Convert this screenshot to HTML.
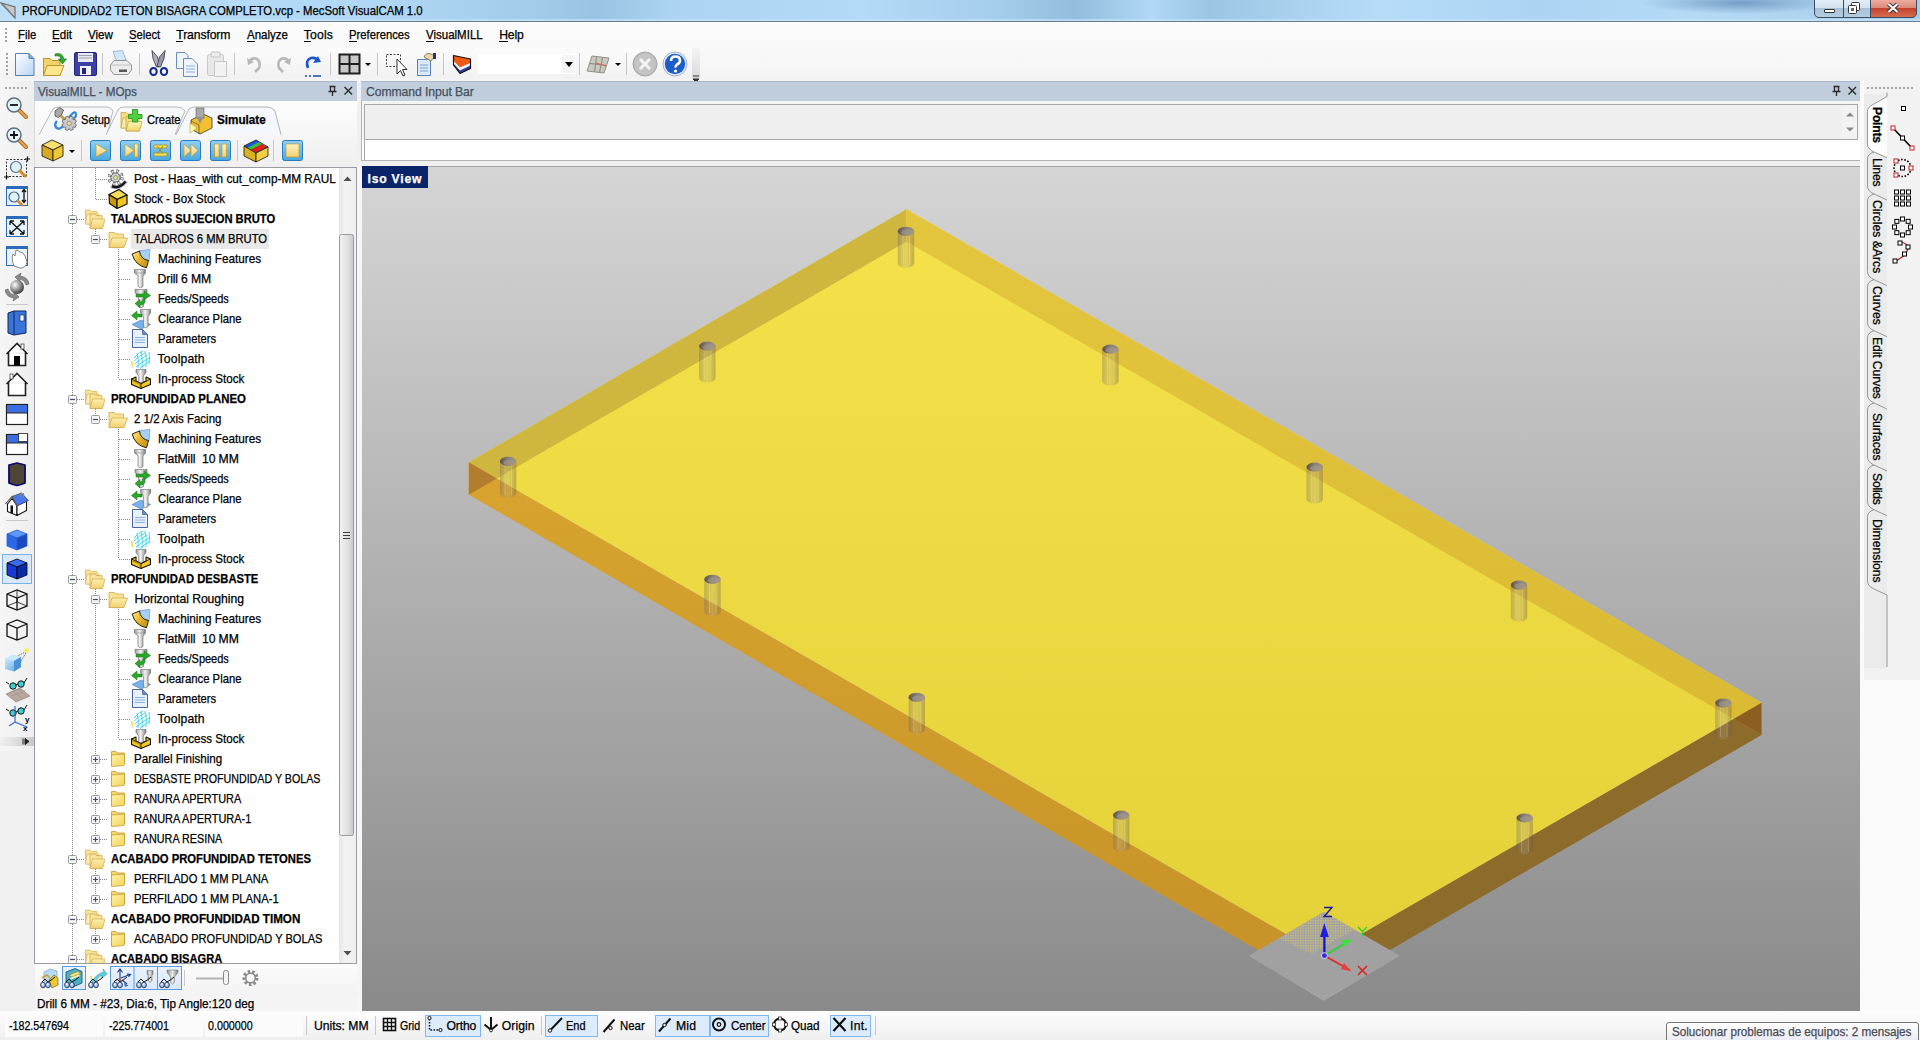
<!DOCTYPE html>
<html><head><meta charset="utf-8"><style>
*{margin:0;padding:0;box-sizing:border-box}
html,body{width:1920px;height:1040px;overflow:hidden;background:#f0f0f0;font-family:"Liberation Sans",sans-serif;font-size:11.5px;color:#000}
.a{position:absolute}
.t{position:absolute;white-space:pre;line-height:14px;-webkit-text-stroke:0.25px currentColor}
svg{position:absolute;overflow:visible}
</style></head><body>

<div class="a" style="left:0;top:0;width:1920px;height:22px;background:linear-gradient(90deg,#bcdef7 0%,#b6dbf6 10%,#afd7f4 20%,#a2cbe9 28%,#98c3e2 31%,#acd4f2 35%,#b3daf6 45%,#a5cdec 52%,#92bddc 56%,#b1d8f6 60%,#9ac5e3 63%,#a9d1ee 67%,#b6dcf8 72%,#acd4f2 80%,#b4daf6 88%,#a8cdea 100%)"></div>
<div class="a" style="left:1640px;top:-8px;width:200px;height:22px;background:radial-gradient(ellipse at center,rgba(70,110,160,0.55) 0%,rgba(70,110,160,0) 70%)"></div>
<div class="a" style="left:0;top:19px;width:1920px;height:2px;background:#c4e4f8;opacity:0.7"></div>
<div class="a" style="left:0;top:21px;width:1920px;height:1px;background:#6b7d8f"></div>

<svg style="left:0;top:1px" width="18" height="20"><path d="M1 2 L15 17 L15 6 Z" fill="#c8c8c8" stroke="#707070" stroke-width="1.2"/><path d="M4 4 L13 14" stroke="#909090" stroke-width="1"/></svg>
<div class="t" style="left:21.50px;top:3.94px;font-size:12.2px;transform:scaleX(0.9305);transform-origin:0 0;">PROFUNDIDAD2 TETON BISAGRA COMPLETO.vcp - MecSoft VisualCAM 1.0</div>
<div class="a" style="left:1814px;top:-2px;width:103px;height:20px;border:1px solid #3c4c5c;border-radius:0 0 5px 5px;overflow:hidden;background:#000">
<div class="a" style="left:0;top:0;width:28px;height:18px;background:linear-gradient(180deg,#e4eef7 0%,#d3e2ef 48%,#a9c1d8 52%,#b5cde2 100%)"></div>
<div class="a" style="left:28px;top:0;width:1px;height:18px;background:#3c4c5c"></div>
<div class="a" style="left:29px;top:0;width:26px;height:18px;background:linear-gradient(180deg,#e4eef7 0%,#d3e2ef 48%,#a9c1d8 52%,#b5cde2 100%)"></div>
<div class="a" style="left:55px;top:0;width:1px;height:18px;background:#3c4c5c"></div>
<div class="a" style="left:56px;top:0;width:47px;height:18px;background:linear-gradient(180deg,#eeb1a4 0%,#dc8b7a 48%,#c5432c 52%,#d26c4f 100%)"></div>
</div>
<div class="a" style="left:1824px;top:9px;width:11px;height:4px;background:#fff;border:1px solid #333;border-radius:1px"></div>
<svg style="left:1848px;top:2px" width="14" height="13"><rect x="3.5" y="0.5" width="8" height="8" rx="1" fill="#fff" stroke="#333"/><rect x="0.5" y="3.5" width="8" height="8" rx="1" fill="#fff" stroke="#333"/><rect x="3" y="6" width="3" height="3" fill="#666"/></svg>
<svg style="left:1887px;top:3px" width="12" height="10"><path d="M1.5 1 L10.5 9 M10.5 1 L1.5 9" stroke="#333" stroke-width="4"/><path d="M1.5 1 L10.5 9 M10.5 1 L1.5 9" stroke="#fff" stroke-width="2.2"/></svg>

<div class="a" style="left:0;top:22px;width:1920px;height:59px;background:linear-gradient(180deg,#fbfbfb 0%,#f8f8f8 50%,#f4f4f4 100%)"></div>
<div class="a" style="left:5px;top:28px;width:2px;height:14px;background:repeating-linear-gradient(180deg,#a0a0a0 0 2px,transparent 2px 4px)"></div>
<div class="t" style="left:18.00px;top:28.14px;font-size:12.2px;transform:scaleX(0.9283);transform-origin:0 0;">File</div>
<div class="a" style="left:18.0px;top:41px;width:7.1px;height:1px;background:#000"></div>
<div class="t" style="left:51.75px;top:28.14px;font-size:12.2px;transform:scaleX(0.9513);transform-origin:0 0;">Edit</div>
<div class="a" style="left:51.8px;top:41px;width:7.8px;height:1px;background:#000"></div>
<div class="t" style="left:88.00px;top:28.14px;font-size:12.2px;transform:scaleX(0.9533);transform-origin:0 0;">View</div>
<div class="a" style="left:88.0px;top:41px;width:7.8px;height:1px;background:#000"></div>
<div class="t" style="left:128.75px;top:28.14px;font-size:12.2px;transform:scaleX(0.9216);transform-origin:0 0;">Select</div>
<div class="a" style="left:128.8px;top:41px;width:7.8px;height:1px;background:#000"></div>
<div class="t" style="left:176.25px;top:28.14px;font-size:12.2px;letter-spacing:-0.111px;">Transform</div>
<div class="a" style="left:176.2px;top:41px;width:7.1px;height:1px;background:#000"></div>
<div class="t" style="left:247.00px;top:28.14px;font-size:12.2px;transform:scaleX(0.9446);transform-origin:0 0;">Analyze</div>
<div class="a" style="left:247.0px;top:41px;width:7.8px;height:1px;background:#000"></div>
<div class="t" style="left:303.75px;top:28.14px;font-size:12.2px;letter-spacing:0.192px;">Tools</div>
<div class="a" style="left:303.8px;top:41px;width:7.1px;height:1px;background:#000"></div>
<div class="t" style="left:349.25px;top:28.14px;font-size:12.2px;transform:scaleX(0.9235);transform-origin:0 0;">Preferences</div>
<div class="a" style="left:349.2px;top:41px;width:7.8px;height:1px;background:#000"></div>
<div class="t" style="left:425.75px;top:28.14px;font-size:12.2px;transform:scaleX(0.9437);transform-origin:0 0;">VisualMILL</div>
<div class="a" style="left:425.8px;top:41px;width:7.8px;height:1px;background:#000"></div>
<div class="t" style="left:499.25px;top:28.14px;font-size:12.2px;letter-spacing:-0.197px;">Help</div>
<div class="a" style="left:499.2px;top:41px;width:8.4px;height:1px;background:#000"></div>
<div class="a" style="left:3px;top:48px;width:697px;height:31px;background:linear-gradient(180deg,#fbfbfb,#f1f1f1);border-radius:3px"></div>
<div class="a" style="left:6px;top:53px;width:2px;height:22px;background:repeating-linear-gradient(180deg,#a0a0a0 0 2px,transparent 2px 4px)"></div>
<div class="a" style="left:102px;top:53px;width:1px;height:22px;background:#c5c5c5"></div>
<div class="a" style="left:139px;top:53px;width:1px;height:22px;background:#c5c5c5"></div>
<div class="a" style="left:234px;top:53px;width:1px;height:22px;background:#c5c5c5"></div>
<div class="a" style="left:330px;top:53px;width:1px;height:22px;background:#c5c5c5"></div>
<div class="a" style="left:377px;top:53px;width:1px;height:22px;background:#c5c5c5"></div>
<div class="a" style="left:443px;top:53px;width:1px;height:22px;background:#c5c5c5"></div>
<div class="a" style="left:579px;top:53px;width:1px;height:22px;background:#c5c5c5"></div>
<div class="a" style="left:626px;top:53px;width:1px;height:22px;background:#c5c5c5"></div>
<div class="a" style="left:692px;top:48px;width:8px;height:31px;background:linear-gradient(180deg,#f4f4f4,#d8d8d8)"></div>
<svg style="left:0;top:44px" width="700" height="36">
<!-- new doc -->
<path d="M15.5 9.5 H29 L34 14.5 V31.5 H15.5 Z" fill="url(#gdoc)" stroke="#5a7fae"/>
<path d="M29 9.5 V14.5 H34" fill="#7aa6d6" stroke="#5a7fae"/>
<!-- open folder -->
<path d="M43.5 14.5 H50 L52 16.5 H60 V31.5 H43.5 Z" fill="#f2d36a" stroke="#b8962a"/>
<path d="M43.5 31.5 L47 21.5 H64 L60 31.5 Z" fill="#fbe78e" stroke="#b8962a"/>
<path d="M55 10 Q62 8 64 15 L66.5 15 L62.5 20 L58.5 15 L61 15 Q60 11 55 12 Z" fill="#2ea82e" stroke="#1a701a" stroke-width="0.6"/>
<!-- save -->
<rect x="74.5" y="8.5" width="22" height="23" rx="1.5" fill="#3b3fa6" stroke="#23257a"/>
<rect x="78" y="9" width="15" height="9" fill="#e8e8f0"/>
<path d="M79 11.5 H92 M79 14 H92" stroke="#a0a0b8"/>
<rect x="80" y="22" width="11" height="9" fill="#f0f0f8"/>
<rect x="82" y="24" width="4" height="6" fill="#23257a"/>
<!-- print -->
<path d="M113 7.5 L122.5 6.5 L126 16 L116.5 17 Z" fill="#d2e8fa" stroke="#8aa8c8" stroke-width="0.8"/>
<path d="M110.5 21 L114 16.5 H127 L131.5 21 V26 L128 30.5 H114 L110.5 26 Z" fill="#ececec" stroke="#8a8a8a" stroke-width="0.9"/>
<path d="M110.5 21 L131.5 21" stroke="#b8b8b8" stroke-width="0.8"/>
<rect x="119" y="25.5" width="8" height="2.5" fill="#555"/>
<!-- cut -->
<path d="M152 6.5 L157.5 13 L160 22.5 L156.5 23 L153 14.5 Z" fill="#b0b0c0" stroke="#303040" stroke-width="0.8" stroke-linejoin="round"/>
<path d="M165 6.5 L164 14.5 L160.5 23 L157 22.5 L159.5 13 Z" fill="#9898a8" stroke="#303040" stroke-width="0.8" stroke-linejoin="round"/>
<ellipse cx="153.5" cy="27.5" rx="3.2" ry="3.6" fill="none" stroke="#102a90" stroke-width="2"/>
<ellipse cx="164" cy="27.5" rx="3.2" ry="3.6" fill="none" stroke="#102a90" stroke-width="2"/>
<!-- copy -->
<path d="M176.5 8.5 H185 L188 11.5 V24.5 H176.5 Z" fill="#eef4fc" stroke="#6a8cc0"/>
<path d="M183.5 14.5 H192 L197.5 20 V32.5 H183.5 Z" fill="#eef4fc" stroke="#6a8cc0"/>
<path d="M186 22 H195 M186 25 H195 M186 28 H195" stroke="#8ab0e0"/>
<!-- paste (disabled) -->
<rect x="207.5" y="10.5" width="16" height="21" rx="2" fill="#e8e8e8" stroke="#c8c8c8"/>
<rect x="211" y="8" width="9" height="5" rx="1" fill="#ececec" stroke="#c4c4c4"/>
<path d="M214.5 17.5 H226.5 V32.5 H214.5 Z" fill="#f2f2f2" stroke="#c8c8c8"/>
<!-- undo / redo gray -->
<path d="M249 18 Q252 13 257 15 Q261 18 259 24 L255 28" fill="none" stroke="#b8b8b8" stroke-width="2.6"/>
<path d="M247 14 L248 21 L254 18 Z" fill="#b8b8b8"/>
<path d="M289 18 Q286 13 281 15 Q277 18 279 24 L283 28" fill="none" stroke="#b8b8b8" stroke-width="2.6"/>
<path d="M291 14 L290 21 L284 18 Z" fill="#b8b8b8"/>
<!-- refresh blue -->
<path d="M308 24 Q305 16 311 14 Q317 13 318 18" fill="none" stroke="#1a56c8" stroke-width="2.6"/>
<path d="M313 19 L321 18 L318 12 Z" fill="#1a56c8"/>
<path d="M305 32 H307 M309 32 H311 M313 32 H321" stroke="#1a4ab0" stroke-width="1.6"/>
<!-- grid view -->
<rect x="339.5" y="10.5" width="20" height="19" fill="#c8c8c8" stroke="#202020" stroke-width="2"/>
<path d="M349.5 10.5 V29.5 M339.5 20 H359.5" stroke="#202020" stroke-width="2"/>
<path d="M365 19 H371 L368 22 Z" fill="#000"/>
<!-- select window -->
<rect x="386.5" y="10.5" width="14" height="12" fill="none" stroke="#404040" stroke-dasharray="2 1.5"/>
<path d="M397 15 L397 30 L400.5 26.5 L403 32 L405 31 L402.5 25.5 L407 25.5 Z" fill="#fff" stroke="#303030"/>
<!-- props -->
<path d="M417.5 15.5 H430.5 V31.5 H417.5 Z" fill="#dbe9f8" stroke="#5a80b8"/>
<path d="M420 21 H428 M420 24 H428 M420 27 H428" stroke="#7aa0d8"/>
<path d="M424 13 Q426 8 431 10 L435 12 L431 17 Z" fill="#e8d8a8" stroke="#806040" stroke-width="0.8"/>
<rect x="433" y="9" width="3" height="6" fill="#2030a0"/>
<!-- stock shape -->
<path d="M453.5 11.5 L470.5 15 V19 L460 23.5 L453.5 17 Z" fill="#f05a14"/>
<path d="M453.5 17 L460 23.5 L470.5 19 V21.5 L460 26.5 L453.5 19.5 Z" fill="#f4f0ff"/>
<path d="M453.5 19.5 L460 26.5 L470.5 21.5 V24.5 L460 29.5 L453.5 21 Z" fill="#2a3a98"/>
<path d="M453.5 11.5 L470.5 15 V24.5 L460 29.5 L453.5 21 Z" fill="none" stroke="#111" stroke-width="1.2" stroke-linejoin="round"/>
<!-- combo -->
<rect x="478" y="10" width="98" height="20" fill="#fff"/>
<rect x="562" y="11" width="13" height="18" fill="#f4f4f4"/>
<path d="M565 18 H573 L569 23 Z" fill="#000"/>
<!-- grid2 -->
<path d="M592 12 L609 14 L604 29 L587 27 Z" fill="#c8c8c0" stroke="#909088"/>
<path d="M590 19.5 L607 21.5 M596.5 13 L594.5 28 M602.5 13.5 L599.5 28.5" stroke="#888880"/>
<path d="M596 19 L606 22" stroke="#e06040" stroke-width="1"/>
<path d="M615 19 H621 L618 22 Z" fill="#000"/>
<!-- X circle gray -->
<circle cx="645" cy="20" r="12" fill="#bdbdbd" stroke="#a8a8a8"/>
<circle cx="645" cy="20" r="10.5" fill="#c4c4c4"/>
<path d="M640 15 L650 25 M650 15 L640 25" stroke="#f4f4f4" stroke-width="3"/>
<!-- help -->
<circle cx="675" cy="20" r="12" fill="#e4ecf8" stroke="#a0b4d0"/>
<circle cx="675" cy="20" r="10.2" fill="#1e5cc8"/>
<path d="M671 17 Q671 12.5 675.5 12.5 Q680 12.5 680 16.5 Q680 19 677 20.5 Q675.5 21.5 675.5 23.5" fill="none" stroke="#fff" stroke-width="2.6"/>
<circle cx="675.5" cy="27" r="1.6" fill="#fff"/>
<path d="M693 32 H699 M693 35 H699 L696 38 Z" stroke="#333" fill="#333"/>
<defs><linearGradient id="gdoc" x1="0" y1="0" x2="1" y2="1"><stop offset="0" stop-color="#ffffff"/><stop offset="1" stop-color="#b8d4f4"/></linearGradient></defs>
</svg>
<div class="a" style="left:0;top:81px;width:35px;height:670px;background:linear-gradient(90deg,#f6f6f6,#eeeeee);border-right:1px solid #d8d8d8"></div>
<div class="a" style="left:5px;top:87px;width:24px;height:2px;background:repeating-linear-gradient(90deg,#a8a8a8 0 2px,transparent 2px 4px)"></div>
<div class="a" style="left:0;top:737px;width:34px;height:9px;background:linear-gradient(90deg,#f0f0f0,#c8c8c8)"></div>
<svg style="left:22px;top:737px" width="10" height="9"><path d="M1 1.5 V7.5 M3 1.5 L7 4.5 L3 7.5 Z" stroke="#222" fill="#222"/></svg>
<div class="a" style="left:6px;top:304px;width:22px;height:1px;background:#c8c8c8"></div>
<div class="a" style="left:6px;top:520px;width:22px;height:1px;background:#c8c8c8"></div>
<svg style="left:0;top:0" width="35" height="760"><path d="M19.5 110.5 L26 117" stroke="#a86a20" stroke-width="4" stroke-linecap="round"/><path d="M19.5 110.5 L26 117" stroke="#e8a050" stroke-width="2.4" stroke-linecap="round"/><circle cx="14" cy="105" r="7" fill="#e4f6fc" stroke="#5a7080" stroke-width="1.5"/><path d="M10 105 H18" stroke="#111" stroke-width="1.8"/><path d="M19.5 140.5 L26 147" stroke="#a86a20" stroke-width="4" stroke-linecap="round"/><path d="M19.5 140.5 L26 147" stroke="#e8a050" stroke-width="2.4" stroke-linecap="round"/><circle cx="14" cy="135" r="7" fill="#e4f6fc" stroke="#5a7080" stroke-width="1.5"/><path d="M10 135 H18 M14 131 V139" stroke="#111" stroke-width="1.8"/><rect x="6.5" y="159.5" width="20" height="17" fill="none" stroke="#333" stroke-dasharray="2 1.5"/><circle cx="16" cy="167" r="5.5" fill="#dff2fb" stroke="#4a6a8a" stroke-width="1.2"/><path d="M20 171 L25 176" stroke="#d48a2a" stroke-width="3" stroke-linecap="round"/><path d="M4 177 H9 M6.5 174.5 V179.5 M25 159 H30 M27.5 156.5 V161.5" stroke="#111" stroke-width="1.2"/><rect x="6.5" y="186.5" width="21" height="19" fill="#e8f3fb" stroke="#2a6ab8"/><rect x="6" y="186" width="22" height="3" fill="#2a6ab8"/><circle cx="14" cy="197" r="5" fill="#dff2fb" stroke="#4a6a8a" stroke-width="1.2"/><path d="M18 201 L22 205" stroke="#d48a2a" stroke-width="2.6" stroke-linecap="round"/><path d="M24 190 V202 M22 192 L24 189.5 L26 192 M22 200 L24 202.5 L26 200" stroke="#111" stroke-width="1.3" fill="none"/><rect x="6.5" y="216.5" width="21" height="20" fill="#e8f3fb" stroke="#2a6ab8"/><rect x="6" y="216" width="22" height="3" fill="#2a6ab8"/><path d="M10 221 L24 234 M24 221 L10 234 M10 221 h4 M10 221 v4 M24 221 h-4 M24 221 v4 M10 234 h4 M10 234 v-4 M24 234 h-4 M24 234 v-4" stroke="#111" stroke-width="1.3"/><rect x="6.5" y="246.5" width="21" height="19" fill="#e8f3fb" stroke="#2a6ab8"/><rect x="6" y="246" width="22" height="3" fill="#2a6ab8"/><path d="M14 266 Q11 258 13 254 L15 256 L16 250 L19 251 L20 252 L23 253 L25 256 L27 262 Q26 268 20 268 Z" fill="#fff" stroke="#777" stroke-width="0.9"/><defs><radialGradient id="gsph" cx="0.35" cy="0.35" r="0.7"><stop offset="0" stop-color="#ffffff"/><stop offset="0.5" stop-color="#9a9a9a"/><stop offset="1" stop-color="#3a3a3a"/></radialGradient></defs><path d="M5 290 Q6 297 14 298 L13 301 L19 297 L14 292 L14 295 Q9 294 8 289 Z" fill="#8a8a8a" stroke="#5a5a5a" stroke-width="0.6"/><path d="M29 284 Q28 277 20 276 L21 273 L15 277 L20 282 L20 279 Q25 280 26 285 Z" fill="#8a8a8a" stroke="#5a5a5a" stroke-width="0.6"/><circle cx="17" cy="287" r="7" fill="url(#gsph)"/><path d="M8 313 L14 311 H26 V333 L14 335 L8 333 Z" fill="#3a74d8" stroke="#102a60"/><path d="M14 311 V335" stroke="#102a60"/><rect x="20" y="315" width="4" height="6" fill="#fff" stroke="#102a60" stroke-width="0.7"/><path d="M6.5 354 L17 343.5 L27.5 354 M8.5 352 V365.5 H25.5 V352" fill="#fff" stroke="#222" stroke-width="1.6"/><rect x="14" y="356" width="6" height="9.5" fill="#000"/><rect x="21" y="344" width="3" height="5" fill="#fff" stroke="#444" stroke-width="0.8"/><path d="M6.5 384 L17 373.5 L27.5 384 M8.5 382 V395.5 H25.5 V382" fill="#fff" stroke="#222" stroke-width="1.6"/><rect x="10" y="374" width="3" height="5" fill="#fff" stroke="#444" stroke-width="0.8"/><rect x="6.5" y="404.5" width="21" height="20" fill="#fff" stroke="#222" stroke-width="1.2"/><rect x="7" y="405" width="20" height="8" fill="#3a6ee0"/><path d="M6.5 413 H27.5" stroke="#222"/><rect x="6.5" y="434.5" width="21" height="20" fill="#fff" stroke="#222" stroke-width="1.2"/><rect x="7" y="435" width="20" height="8" fill="#3a6ee0"/><path d="M6.5 443 H27.5" stroke="#222"/><rect x="18.5" y="433.5" width="9" height="8" fill="#fff" stroke="#222" stroke-width="0.8"/><path d="M9 465 L13 464 L17 463 L21 464 L25 465 V483 L21 484.5 L17 485.5 L13 484.5 L9 483 Z" fill="#4e4634" stroke="#0a0a70" stroke-width="1.8" stroke-linejoin="round"/><path d="M7.5 504 L12 498.5 L17 505.5 V515.5 L7.5 511.5 Z" fill="#fff" stroke="#111" stroke-width="1.1" stroke-linejoin="round"/><path d="M17 505.5 L26.5 501 V510.5 L17 515.5 Z" fill="#fff" stroke="#111" stroke-width="1.1" stroke-linejoin="round"/><path d="M12 496.5 L21.5 493 L28.5 500.5 L17 506 Z" fill="#4a78e8" stroke="#444" stroke-width="0.7" stroke-linejoin="round"/><path d="M5.5 504 L12 496.5 L17 506" fill="none" stroke="#555" stroke-width="1.1"/><path d="M21 492.5 V497 M23.5 493 V497.5" stroke="#888" stroke-width="1.1"/><rect x="10.5" y="505.5" width="2.5" height="7.5" fill="#111"/><path d="M7 534 L17 530 L27 534 L17 538 Z" fill="#5a9af8" stroke="#2a5ad0" stroke-width="0.8"/><path d="M7 534 L17 538 V550 L7 546 Z" fill="#2a6ae8" stroke="#2a5ad0" stroke-width="0.8"/><path d="M27 534 L17 538 V550 L27 546 Z" fill="#1a4ac0" stroke="#2a5ad0" stroke-width="0.8"/><rect x="2.5" y="554.5" width="29" height="29" fill="#d8e8f8" stroke="#7ab0e8"/><path d="M7 563 L17 559 L27 563 L17 567 Z" fill="#3a6af0" stroke="#000" stroke-width="0.8"/><path d="M7 563 L17 567 V579 L7 575 Z" fill="#1a3ad8" stroke="#000" stroke-width="0.8"/><path d="M27 563 L17 567 V579 L27 575 Z" fill="#0a2aa8" stroke="#000" stroke-width="0.8"/><path d="M7 594 L17 590 L27 594 V606 L17 610 L7 606 Z M7 594 L17 598 L27 594 M17 598 V610" fill="none" stroke="#111" stroke-width="1.3"/><path d="M7 606 L17 602 L27 606 M17 590 V602" fill="none" stroke="#111" stroke-width="0.8"/><path d="M7 624 L17 620 L27 624 V636 L17 640 L7 636 Z M7 624 L17 628 L27 624 M17 628 V640" fill="none" stroke="#111" stroke-width="1.3"/><defs><linearGradient id="gcub" x1="0" y1="0" x2="1" y2="1"><stop offset="0" stop-color="#d8f0ff"/><stop offset="1" stop-color="#5aa0e0"/></linearGradient></defs><path d="M14 658 L27 651 M20 663 L27 651" stroke="#333" stroke-width="0.7" stroke-dasharray="1.5 1"/><path d="M5 659 L12 655 L21 657 V667 L14 671.5 L5 669 Z" fill="url(#gcub)"/><path d="M5 659 L12 655 L21 657 L14 661 Z" fill="#c8e8fc"/><path d="M14 661 V671.5 L21 667 V657 Z" fill="#4a90d8"/><circle cx="26.5" cy="650.5" r="2.2" fill="#f4f040"/><path d="M6 694 L20 688 L30 696 L16 702 Z" fill="#b8a8a0" stroke="#8a7a70" stroke-width="0.6"/><path d="M9 693 L23 687 M12 696 L26 690 M13 691 L23 699 M18 689 L27 697" stroke="#9a8a80" stroke-width="0.5"/><circle cx="13" cy="686" r="3.2" fill="#40d0d0" stroke="#111" stroke-width="1"/><circle cx="21" cy="684" r="3.2" fill="#40d0d0" stroke="#111" stroke-width="1"/><path d="M6 682 L9 684 M16 685 L18 684 M24 683 L27 678" stroke="#111"/><circle cx="13" cy="713" r="3.2" fill="#40d0d0" stroke="#111" stroke-width="1"/><circle cx="21" cy="711" r="3.2" fill="#40d0d0" stroke="#111" stroke-width="1"/><path d="M6 709 L9 711 M16 712 L18 711 M24 710 L27 705" stroke="#111"/><path d="M15 706 V722 L27 727 M15 722 L9 726" stroke="#3a6ad0" stroke-width="1.2" fill="none"/><text x="25" y="722" font-size="8" font-weight="bold" font-family="Liberation Sans">y</text><text x="23" y="731" font-size="8" font-weight="bold" font-family="Liberation Sans">x</text></svg>
<div class="a" style="left:35px;top:81px;width:326px;height:932px;background:#f0f0f0"></div>
<div class="a" style="left:35px;top:101px;width:322px;height:66px;background:linear-gradient(180deg,#fdfdfd 0%,#f6f6f6 50%,#efefef 100%)"></div>
<div class="a" style="left:34px;top:81px;width:323px;height:20px;background:#bfcddc;border-top:1px solid #a9b8c8"></div>
<div class="t" style="left:38.25px;top:85.44px;font-size:12.2px;transform:scaleX(0.9606);transform-origin:0 0;color:#45505c;">VisualMILL - MOps</div>
<svg style="left:327px;top:85px" width="26" height="12"><path d="M2.5 1.5 H8.5 M3.5 1.5 V6.5 H7.5 V1.5 M1.5 6.5 H9.5 M5.5 6.5 V11" stroke="#2a2a2a" stroke-width="1.3" fill="none"/><path d="M17.5 2 L25 9.5 M25 2 L17.5 9.5" stroke="#2a2a2a" stroke-width="1.4"/></svg>
<svg style="left:35px;top:102.5px" width="322" height="36">
<path d="M4 31.8 L18 6 Q20 4 24 4 H72 Q76 4 78 8 L72 31.8" fill="#f5f7f9" stroke="#a8a8a8" stroke-width="0.8"/>
<path d="M71 31.8 L83 7 Q85 4 89 4 H142 Q147 4 150 8 L140 31.8" fill="#f5f7f9" stroke="#a8a8a8" stroke-width="0.8"/>
<path d="M141 31.8 L154 6 Q156 4 160 4 H232 Q237 4 240 8 L246 31.8" fill="#f4f7fb" stroke="#a0a0a0" stroke-width="0.8"/>
</svg>
<div class="t" style="left:81.00px;top:113.04px;font-size:12.2px;transform:scaleX(0.9096);transform-origin:0 0;">Setup</div>
<div class="t" style="left:147.40px;top:113.04px;font-size:12.2px;transform:scaleX(0.9176);transform-origin:0 0;">Create</div>
<div class="t" style="left:216.70px;top:113.04px;font-size:12.2px;transform:scaleX(0.9597);transform-origin:0 0;font-weight:bold;">Simulate</div>
<svg style="left:0;top:0" width="360" height="170">
<!-- setup icon -->
<path d="M59 114 L67.5 122.5" stroke="#c8a040" stroke-width="3"/>
<path d="M55 111 L59.5 107.5 L63.5 110 L62 114 L58.5 117.5 L55 116 Z" fill="#a8a8a8" stroke="#505050" stroke-width="0.8"/>
<path d="M57 121 Q54 124 56 127.5 Q59 130 62 127 L66 123" fill="none" stroke="#3a88d8" stroke-width="2.4"/>
<path d="M69 117 L73 113 Q76 111 76 115 Q76 118 73 118" fill="none" stroke="#3a88d8" stroke-width="2.2"/>
<path d="M76.36 124.70 L75.25 127.38 L73.14 126.99 L72.89 127.24 L73.28 129.35 L70.60 130.46 L69.38 128.70 L69.02 128.70 L67.80 130.46 L65.12 129.35 L65.51 127.24 L65.26 126.99 L63.15 127.38 L62.04 124.70 L63.80 123.48 L63.80 123.12 L62.04 121.90 L63.15 119.22 L65.26 119.61 L65.51 119.36 L65.12 117.25 L67.80 116.14 L69.02 117.90 L69.38 117.90 L70.60 116.14 L73.28 117.25 L72.89 119.36 L73.14 119.61 L75.25 119.22 L76.36 121.90 L74.60 123.12 L74.60 123.48 Z" fill="#c8c8c8" stroke="#6a6a6a" stroke-width="0.9"/>
<circle cx="69.2" cy="123.3" r="2.2" fill="#f0d890" stroke="#8a8a8a" stroke-width="0.9"/>
<!-- create icon -->
<path d="M121 112.5 H126 L127.5 114 H134 V128 H121 Z" fill="#f4dc80" stroke="#c8a848" stroke-width="0.8"/>
<path d="M121 128 L123 118 H135 L133 128 Z" fill="#fcecb0" stroke="#c8a848" stroke-width="0.8"/>
<path d="M126 116.5 H131 L132.5 118 H139 V131 H126 Z" fill="#f4dc80" stroke="#c8a848" stroke-width="0.8"/>
<path d="M126 131 L128.5 121.5 H142 L139.5 131 Z" fill="url(#gyel2)" stroke="#c8a848" stroke-width="0.8"/>
<defs><linearGradient id="gyel2" x1="0" y1="0" x2="0" y2="1"><stop offset="0" stop-color="#fff4c0"/><stop offset="1" stop-color="#f2d868"/></linearGradient></defs>
<path d="M132.5 109.5 H137.5 V114.5 H142 V118.5 H137.5 V122 H132.5 V118.5 H128.5 V114.5 H132.5 Z" fill="#50d040" stroke="#289a20" stroke-width="0.9"/>
<!-- simulate icon -->
<path d="M191 120 L203 114 L212 118 L212 128 L200 134 L191 129 Z" fill="#f0c030" stroke="#3a3a2a" stroke-width="0.8"/>
<path d="M191 121 L199 125 V134" fill="none" stroke="#3a3a2a" stroke-width="0.6"/>
<rect x="196" y="108" width="8" height="10" fill="#a8a8a8" stroke="#606060" stroke-width="0.6"/>
<path d="M197 118 L200 124 L203 118 Z" fill="#909090"/>
<path d="M190 123 L190 133 L197 128 Z" fill="#fff8b0" stroke="#b0a040" stroke-width="0.6"/>
<!-- icon row -->
<path d="M42 145 L52 140 L63 145 L53 150 Z" fill="#f8e070" stroke="#222" stroke-width="0.9"/>
<path d="M42 145 L53 150 V161 L42 156 Z" fill="#d8a820" stroke="#222" stroke-width="0.9"/>
<path d="M63 145 L53 150 V161 L63 156 Z" fill="#f0c830" stroke="#222" stroke-width="0.9"/>
<path d="M69 150 H75 L72 153 Z" fill="#000"/>
<rect x="81" y="140" width="1" height="21" fill="#c8c8c8"/>
<rect x="237" y="140" width="1" height="21" fill="#c8c8c8"/>
<rect x="273" y="140" width="1" height="21" fill="#c8c8c8"/>
<defs><linearGradient id="gbtn" x1="0" y1="0" x2="0" y2="1"><stop offset="0" stop-color="#8fd0f4"/><stop offset="1" stop-color="#48a8e0"/></linearGradient>
<linearGradient id="gyel" x1="0" y1="0" x2="0" y2="1"><stop offset="0" stop-color="#fff4c8"/><stop offset="1" stop-color="#f0d070"/></linearGradient></defs>
<rect x="90.5" y="140.5" width="20" height="20" rx="2" fill="url(#gbtn)" stroke="#2a7ac0"/><rect x="120.5" y="140.5" width="20" height="20" rx="2" fill="url(#gbtn)" stroke="#2a7ac0"/><rect x="150.5" y="140.5" width="20" height="20" rx="2" fill="url(#gbtn)" stroke="#2a7ac0"/><rect x="180.5" y="140.5" width="20" height="20" rx="2" fill="url(#gbtn)" stroke="#2a7ac0"/><rect x="210.5" y="140.5" width="20" height="20" rx="2" fill="url(#gbtn)" stroke="#2a7ac0"/><rect x="282.5" y="140.5" width="20" height="20" rx="2" fill="url(#gbtn)" stroke="#2a7ac0"/>
<path d="M96 144 L107 150.5 L96 157 Z" fill="url(#gyel)" stroke="#c09a30" stroke-width="0.7"/>
<path d="M125 144 L134 150.5 L125 157 Z M134.5 144 H138 V157 H134.5 Z" fill="url(#gyel)" stroke="#c09a30" stroke-width="0.7"/>
<path d="M154 145 H167 V148 H154 Z M154 153 H167 V156 H154 Z" fill="#f8e060" stroke="#a09020" stroke-width="0.7"/>
<path d="M157 146 L163 154 M163 146 L157 154" stroke="#a09020" stroke-width="1"/>
<path d="M184 144 L191 150.5 L184 157 Z M191 144 L198 150.5 L191 157 Z" fill="url(#gyel)" stroke="#c09a30" stroke-width="0.7"/>
<path d="M214.5 144 H219 V157 H214.5 Z M222 144 H226.5 V157 H222 Z" fill="url(#gyel)" stroke="#c09a30" stroke-width="0.7"/>
<rect x="286" y="144" width="13" height="13" fill="url(#gyel)" stroke="#c09a30" stroke-width="0.7"/>
<!-- colored stock -->
<path d="M244 146 L256 140 L268 147 L256 153 Z" fill="#2050e0" stroke="#111" stroke-width="0.8"/>
<path d="M247 148 L259 142 L266 146 L254 152 Z" fill="#30c040"/>
<path d="M250 150 L262 144 L267 147 L255 153 Z" fill="#e02020"/>
<path d="M244 146 L256 153 V162 L244 156 Z" fill="#d8b020" stroke="#111" stroke-width="0.8"/>
<path d="M268 147 L256 153 V162 L268 156 Z" fill="#f0d040" stroke="#111" stroke-width="0.8"/>
</svg>
<div class="a" style="left:35px;top:964px;width:327px;height:48px;background:linear-gradient(180deg,#fcfcfc 0%,#f3f3f3 60%,#f0f0f0 100%)"></div>
<div class="a" style="left:357px;top:167px;width:5px;height:845px;background:#f6f6f6"></div>
<div class="a" style="left:34px;top:167px;width:323px;height:797px;background:#fff;border:1px solid #9a9aa0"></div>
<svg width="0" height="0" style="position:absolute">
<defs>
<linearGradient id="gfold" x1="0" y1="0" x2="0" y2="1"><stop offset="0" stop-color="#fdf0b0"/><stop offset="1" stop-color="#f0d070"/></linearGradient>
<linearGradient id="gtool" x1="0" y1="0" x2="1" y2="0"><stop offset="0" stop-color="#9a9a9a"/><stop offset="0.45" stop-color="#f4f4f4"/><stop offset="1" stop-color="#808080"/></linearGradient>
<symbol id="i_gear" viewBox="0 0 20 20"><path d="M3 17 Q11 21.5 18.5 12" fill="none" stroke="#c8c8d0" stroke-width="4"/><path d="M4 17 Q11 20.5 17.5 12.5" fill="none" stroke="#141420" stroke-width="2.6"/><circle cx="7.5" cy="8.5" r="6.4" fill="none" stroke="#5a5a5a" stroke-width="3.6" stroke-dasharray="2.6 2.42"/><circle cx="7.5" cy="8.5" r="6.4" fill="none" stroke="#d8d8d8" stroke-width="2.2" stroke-dasharray="1.8 3.22" stroke-dashoffset="-0.4"/><circle cx="7.5" cy="8.5" r="4.6" fill="#d0d0d0" stroke="#5a5a5a" stroke-width="0.9"/><circle cx="7.5" cy="8.5" r="2" fill="#f0e090" stroke="#7a7a7a" stroke-width="0.7"/></symbol>
<symbol id="i_cube" viewBox="0 0 20 20"><path d="M1 5.5 L11 0.5 L19 6 L9 10.5 Z" fill="#f6dc58" stroke="#111" stroke-width="1.2" stroke-linejoin="round"/><path d="M1 5.5 L9 10.5 V19.5 L1.5 14.5 Z" fill="#c89808" stroke="#111" stroke-width="1.2" stroke-linejoin="round"/><path d="M19 6 L9 10.5 V19.5 L19 15 Z" fill="#f2c618" stroke="#111" stroke-width="1.2" stroke-linejoin="round"/></symbol>
<symbol id="i_fold2" viewBox="0 0 20 20"><path d="M0.5 1 H5 L6.5 2.5 H12 V15 H0.5 Z" fill="#f8e294" stroke="#dcb862" stroke-width="0.8"/><path d="M0.5 15 L2 5 H14 L12.5 15 Z" fill="#fcefb8" stroke="#dcb862" stroke-width="0.8"/><path d="M5 5 H9.5 L11 6.5 H17 V19.5 H5 Z" fill="#f8e294" stroke="#d6b05a" stroke-width="0.8"/><path d="M5 19.5 L7.5 10 H20 L17.5 19.5 Z" fill="url(#gfold)" stroke="#d6b05a" stroke-width="0.8"/></symbol>
<symbol id="i_fold" viewBox="0 0 20 20"><path d="M1 3.5 H6.5 L8 5 H15.5 V18.5 H1 Z" fill="#f8e294" stroke="#d6b05a" stroke-width="0.9"/><path d="M1 18.5 L4 9 H19.5 L16 18.5 Z" fill="url(#gfold)" stroke="#d6b05a" stroke-width="0.9"/></symbol>
<symbol id="i_foldc" viewBox="0 0 20 20"><path d="M3.5 2.5 H8 L9.5 4 H16.5 V15.5 H3.5 Z" fill="#f4d86a" stroke="#c8a040" stroke-width="0.9"/><path d="M3.5 17.5 V6 L16.5 5 V15.5 L15.5 16.5 Z" fill="url(#gfold2)" stroke="#c8a040" stroke-width="0.9"/></symbol>
<linearGradient id="gfold2" x1="0" y1="0" x2="1" y2="1"><stop offset="0" stop-color="#fff2a8"/><stop offset="1" stop-color="#f2d458"/></linearGradient>
<symbol id="i_mf" viewBox="0 0 20 20"><defs><linearGradient id="ggold" x1="0" y1="0" x2="1" y2="1"><stop offset="0" stop-color="#fff0a0"/><stop offset="0.45" stop-color="#e8b830"/><stop offset="1" stop-color="#b88a10"/></linearGradient></defs><path d="M19 0.5 L8.5 1.5 A10 10 0 0 0 18 12 Z" fill="#a8d0f4" stroke="#5a88c0" stroke-width="0.6"/><path d="M1.2 5 A17.5 17.5 0 0 0 15.5 18.8 L17.5 11.5 A10 10 0 0 1 8.5 2 Z" fill="url(#ggold)" stroke="#2a2008" stroke-width="1"/></symbol>
<symbol id="i_tool" viewBox="0 0 20 20"><path d="M3.5 0.5 H14.5 V4 L12 7 V17.5 Q9.5 20 7 17.5 V7 L3.5 4 Z" fill="url(#gtool)" stroke="#6a6a6a" stroke-width="0.6"/><path d="M3.5 4 H14.5" stroke="#8a8a8a" stroke-width="0.6"/></symbol>
<symbol id="i_feed" viewBox="0 0 20 20"><path d="M4 0.5 H16 V3.5 L12.64 7.5 V17.5 Q10.0 20 7.36 17.5 V7.5 L4 3.5 Z" fill="url(#gtool)" stroke="#6a6a6a" stroke-width="0.6"/><path d="M5 5 H13 V2 L19.5 6.5 L13 11 V8 H5 Z" fill="#2aa82a" stroke="#1a6a1a" stroke-width="0.5"/><path d="M14 10 Q15 16 9 16 V19 L4 14.5 L9 10.5 V13 Q12 13 11.5 10 Z" fill="#2aa82a" stroke="#1a6a1a" stroke-width="0.5"/></symbol>
<symbol id="i_clear" viewBox="0 0 20 20"><path d="M1 15.5 L10 11 L19.5 15.5 L10 20 Z" fill="#7ab0e8" stroke="#4a78b8" stroke-width="0.6"/><path d="M9.5 0.5 H20.0 V3.5 L17.06 7.5 V17.5 Q14.75 20 12.440000000000001 17.5 V7.5 L9.5 3.5 Z" fill="url(#gtool)" stroke="#6a6a6a" stroke-width="0.6"/><path d="M11 5 H6 V2 L0.5 6.5 L6 11 V8 H11 Z" fill="#2aa82a" stroke="#1a6a1a" stroke-width="0.5"/></symbol>
<symbol id="i_param" viewBox="0 0 20 20"><path d="M1.5 0.5 H11.5 L16.5 5.5 V18.5 H1.5 Z" fill="#e8f0fa" stroke="#4a64a0" stroke-width="1"/><path d="M11.5 0.5 V5.5 H16.5 Z" fill="#6a90d0" stroke="#4a64a0" stroke-width="0.8"/><path d="M4 8.5 H14 M4 11 H14 M4 13.5 H14" stroke="#8ab0e8" stroke-width="1.2"/></symbol>
<symbol id="i_path" viewBox="0 0 20 20"><g fill="none" stroke="#38d4f0" stroke-width="0.9"><path d="M3 9 Q7 4 12 2 M3 12 Q8 7 14 4 M4 15 Q9 10 16 6 M5 18 Q11 13 18 9 M9 19.5 Q14 15 19 12"/><path d="M6 4 Q8 12 7 19 M10 2.5 Q12 10 11 19.5 M14 2 Q16 9 15 18 M18 3 Q19 9 18 15"/></g><path d="M0.5 12 Q1 15 1.5 18" stroke="#f0e040" stroke-width="1.6" fill="none"/></symbol>
<symbol id="i_ips" viewBox="0 0 20 20"><path d="M0.5 10 L5 8 V12 L10 14.5 L15 12 V8 L19.5 10 V15.5 L10 19.5 L0.5 15.5 Z" fill="#f2c81c" stroke="#111" stroke-width="1.1" stroke-linejoin="round"/><path d="M1.5 11.5 L9.5 15.2 V18.5" fill="none" stroke="#c89808" stroke-width="2"/><path d="M5 0.5 H15 V3.5 L12.3 7 V13 Q10 15 7.7 13 V7 L5 3.5 Z" fill="url(#gtool)" stroke="#6a6a6a" stroke-width="0.6"/><path d="M0.5 10 L10 14.5 L19.5 10 M10 14.5 V19.5" fill="none" stroke="#111" stroke-width="0.8"/></symbol>
<symbol id="b_minus" viewBox="0 0 9 9"><rect x="0.5" y="0.5" width="8" height="8" rx="1" fill="#f4f4f4" stroke="#9a9a9a"/><path d="M2 4.5 H7" stroke="#3a5070" stroke-width="1.2"/></symbol>
<symbol id="b_plus" viewBox="0 0 9 9"><rect x="0.5" y="0.5" width="8" height="8" rx="1" fill="#f4f4f4" stroke="#9a9a9a"/><path d="M2 4.5 H7 M4.5 2 V7" stroke="#3a5070" stroke-width="1.2"/></symbol>
</defs></svg>
<div class="a" style="left:35px;top:168px;width:304px;height:795px;overflow:hidden"><div class="a" style="left:37px;top:0px;width:1px;height:795px;background:repeating-linear-gradient(180deg,#858585 0 1px,transparent 1px 2px)"></div><div class="a" style="left:60px;top:0px;width:1px;height:31px;background:repeating-linear-gradient(180deg,#858585 0 1px,transparent 1px 2px)"></div><div class="a" style="left:60px;top:61px;width:1px;height:10px;background:repeating-linear-gradient(180deg,#858585 0 1px,transparent 1px 2px)"></div><div class="a" style="left:60px;top:241px;width:1px;height:10px;background:repeating-linear-gradient(180deg,#858585 0 1px,transparent 1px 2px)"></div><div class="a" style="left:60px;top:421px;width:1px;height:250px;background:repeating-linear-gradient(180deg,#858585 0 1px,transparent 1px 2px)"></div><div class="a" style="left:60px;top:701px;width:1px;height:30px;background:repeating-linear-gradient(180deg,#858585 0 1px,transparent 1px 2px)"></div><div class="a" style="left:60px;top:761px;width:1px;height:10px;background:repeating-linear-gradient(180deg,#858585 0 1px,transparent 1px 2px)"></div><div class="a" style="left:60px;top:801px;width:1px;height:-6px;background:repeating-linear-gradient(180deg,#858585 0 1px,transparent 1px 2px)"></div><div class="a" style="left:83px;top:81px;width:1px;height:130px;background:repeating-linear-gradient(180deg,#858585 0 1px,transparent 1px 2px)"></div><div class="a" style="left:83px;top:261px;width:1px;height:130px;background:repeating-linear-gradient(180deg,#858585 0 1px,transparent 1px 2px)"></div><div class="a" style="left:83px;top:441px;width:1px;height:130px;background:repeating-linear-gradient(180deg,#858585 0 1px,transparent 1px 2px)"></div><div class="a" style="left:61px;top:11px;width:12px;height:1px;background:repeating-linear-gradient(90deg,#858585 0 1px,transparent 1px 2px)"></div><svg style="left:73px;top:1px" width="20" height="20"><use href="#i_gear"/></svg><div class="t" style="left:99.20px;top:3.94px;font-size:12.2px;transform:scaleX(0.9673);transform-origin:0 0;">Post - Haas_with cut_comp-MM RAUL</div><div class="a" style="left:61px;top:31px;width:12px;height:1px;background:repeating-linear-gradient(90deg,#858585 0 1px,transparent 1px 2px)"></div><svg style="left:73px;top:21px" width="20" height="20"><use href="#i_cube"/></svg><div class="t" style="left:99.20px;top:23.94px;font-size:12.2px;transform:scaleX(0.9452);transform-origin:0 0;">Stock - Box Stock</div><div class="a" style="left:42px;top:51px;width:8px;height:1px;background:repeating-linear-gradient(90deg,#858585 0 1px,transparent 1px 2px)"></div><svg style="left:33px;top:46.5px" width="9" height="9"><use href="#b_minus"/></svg><svg style="left:50px;top:41px" width="20" height="20"><use href="#i_fold2"/></svg><div class="t" style="left:76.40px;top:43.94px;font-size:12.2px;transform:scaleX(0.9170);transform-origin:0 0;font-weight:bold;">TALADROS SUJECION BRUTO</div><div class="a" style="left:65px;top:71px;width:8px;height:1px;background:repeating-linear-gradient(90deg,#858585 0 1px,transparent 1px 2px)"></div><svg style="left:56px;top:66.5px" width="9" height="9"><use href="#b_minus"/></svg><svg style="left:73px;top:61px" width="20" height="20"><use href="#i_fold"/></svg><div class="a" style="left:96px;top:61px;width:138px;height:20px;background:#e8e8e8"></div><div class="t" style="left:99.40px;top:63.94px;font-size:12.2px;transform:scaleX(0.9211);transform-origin:0 0;">TALADROS 6 MM BRUTO</div><div class="a" style="left:84px;top:91px;width:12px;height:1px;background:repeating-linear-gradient(90deg,#858585 0 1px,transparent 1px 2px)"></div><svg style="left:96px;top:81px" width="20" height="20"><use href="#i_mf"/></svg><div class="t" style="left:122.60px;top:83.94px;font-size:12.2px;transform:scaleX(0.9632);transform-origin:0 0;">Machining Features</div><div class="a" style="left:84px;top:111px;width:12px;height:1px;background:repeating-linear-gradient(90deg,#858585 0 1px,transparent 1px 2px)"></div><svg style="left:96px;top:101px" width="20" height="20"><use href="#i_tool"/></svg><div class="t" style="left:122.60px;top:103.94px;font-size:12.2px;letter-spacing:-0.144px;">Drill 6 MM</div><div class="a" style="left:84px;top:131px;width:12px;height:1px;background:repeating-linear-gradient(90deg,#858585 0 1px,transparent 1px 2px)"></div><svg style="left:96px;top:121px" width="20" height="20"><use href="#i_feed"/></svg><div class="t" style="left:122.60px;top:123.94px;font-size:12.2px;transform:scaleX(0.9012);transform-origin:0 0;">Feeds/Speeds</div><div class="a" style="left:84px;top:151px;width:12px;height:1px;background:repeating-linear-gradient(90deg,#858585 0 1px,transparent 1px 2px)"></div><svg style="left:96px;top:141px" width="20" height="20"><use href="#i_clear"/></svg><div class="t" style="left:122.60px;top:143.94px;font-size:12.2px;transform:scaleX(0.9268);transform-origin:0 0;">Clearance Plane</div><div class="a" style="left:84px;top:171px;width:12px;height:1px;background:repeating-linear-gradient(90deg,#858585 0 1px,transparent 1px 2px)"></div><svg style="left:96px;top:161px" width="20" height="20"><use href="#i_param"/></svg><div class="t" style="left:122.60px;top:163.94px;font-size:12.2px;transform:scaleX(0.9230);transform-origin:0 0;">Parameters</div><div class="a" style="left:84px;top:191px;width:12px;height:1px;background:repeating-linear-gradient(90deg,#858585 0 1px,transparent 1px 2px)"></div><svg style="left:96px;top:181px" width="20" height="20"><use href="#i_path"/></svg><div class="t" style="left:122.60px;top:183.94px;font-size:12.2px;letter-spacing:0.139px;">Toolpath</div><div class="a" style="left:84px;top:211px;width:12px;height:1px;background:repeating-linear-gradient(90deg,#858585 0 1px,transparent 1px 2px)"></div><svg style="left:96px;top:201px" width="20" height="20"><use href="#i_ips"/></svg><div class="t" style="left:122.60px;top:203.94px;font-size:12.2px;transform:scaleX(0.9509);transform-origin:0 0;">In-process Stock</div><div class="a" style="left:42px;top:231px;width:8px;height:1px;background:repeating-linear-gradient(90deg,#858585 0 1px,transparent 1px 2px)"></div><svg style="left:33px;top:226.5px" width="9" height="9"><use href="#b_minus"/></svg><svg style="left:50px;top:221px" width="20" height="20"><use href="#i_fold2"/></svg><div class="t" style="left:76.40px;top:223.94px;font-size:12.2px;transform:scaleX(0.9351);transform-origin:0 0;font-weight:bold;">PROFUNDIDAD PLANEO</div><div class="a" style="left:65px;top:251px;width:8px;height:1px;background:repeating-linear-gradient(90deg,#858585 0 1px,transparent 1px 2px)"></div><svg style="left:56px;top:246.5px" width="9" height="9"><use href="#b_minus"/></svg><svg style="left:73px;top:241px" width="20" height="20"><use href="#i_fold"/></svg><div class="t" style="left:99.40px;top:243.94px;font-size:12.2px;transform:scaleX(0.9418);transform-origin:0 0;">2 1/2 Axis Facing</div><div class="a" style="left:84px;top:271px;width:12px;height:1px;background:repeating-linear-gradient(90deg,#858585 0 1px,transparent 1px 2px)"></div><svg style="left:96px;top:261px" width="20" height="20"><use href="#i_mf"/></svg><div class="t" style="left:122.60px;top:263.94px;font-size:12.2px;transform:scaleX(0.9632);transform-origin:0 0;">Machining Features</div><div class="a" style="left:84px;top:291px;width:12px;height:1px;background:repeating-linear-gradient(90deg,#858585 0 1px,transparent 1px 2px)"></div><svg style="left:96px;top:281px" width="20" height="20"><use href="#i_tool"/></svg><div class="t" style="left:122.60px;top:283.94px;font-size:12.2px;letter-spacing:-0.100px;">FlatMill  10 MM</div><div class="a" style="left:84px;top:311px;width:12px;height:1px;background:repeating-linear-gradient(90deg,#858585 0 1px,transparent 1px 2px)"></div><svg style="left:96px;top:301px" width="20" height="20"><use href="#i_feed"/></svg><div class="t" style="left:122.60px;top:303.94px;font-size:12.2px;transform:scaleX(0.9012);transform-origin:0 0;">Feeds/Speeds</div><div class="a" style="left:84px;top:331px;width:12px;height:1px;background:repeating-linear-gradient(90deg,#858585 0 1px,transparent 1px 2px)"></div><svg style="left:96px;top:321px" width="20" height="20"><use href="#i_clear"/></svg><div class="t" style="left:122.60px;top:323.94px;font-size:12.2px;transform:scaleX(0.9268);transform-origin:0 0;">Clearance Plane</div><div class="a" style="left:84px;top:351px;width:12px;height:1px;background:repeating-linear-gradient(90deg,#858585 0 1px,transparent 1px 2px)"></div><svg style="left:96px;top:341px" width="20" height="20"><use href="#i_param"/></svg><div class="t" style="left:122.60px;top:343.94px;font-size:12.2px;transform:scaleX(0.9230);transform-origin:0 0;">Parameters</div><div class="a" style="left:84px;top:371px;width:12px;height:1px;background:repeating-linear-gradient(90deg,#858585 0 1px,transparent 1px 2px)"></div><svg style="left:96px;top:361px" width="20" height="20"><use href="#i_path"/></svg><div class="t" style="left:122.60px;top:363.94px;font-size:12.2px;letter-spacing:0.139px;">Toolpath</div><div class="a" style="left:84px;top:391px;width:12px;height:1px;background:repeating-linear-gradient(90deg,#858585 0 1px,transparent 1px 2px)"></div><svg style="left:96px;top:381px" width="20" height="20"><use href="#i_ips"/></svg><div class="t" style="left:122.60px;top:383.94px;font-size:12.2px;transform:scaleX(0.9509);transform-origin:0 0;">In-process Stock</div><div class="a" style="left:42px;top:411px;width:8px;height:1px;background:repeating-linear-gradient(90deg,#858585 0 1px,transparent 1px 2px)"></div><svg style="left:33px;top:406.5px" width="9" height="9"><use href="#b_minus"/></svg><svg style="left:50px;top:401px" width="20" height="20"><use href="#i_fold2"/></svg><div class="t" style="left:76.40px;top:403.94px;font-size:12.2px;transform:scaleX(0.9221);transform-origin:0 0;font-weight:bold;">PROFUNDIDAD DESBASTE</div><div class="a" style="left:65px;top:431px;width:8px;height:1px;background:repeating-linear-gradient(90deg,#858585 0 1px,transparent 1px 2px)"></div><svg style="left:56px;top:426.5px" width="9" height="9"><use href="#b_minus"/></svg><svg style="left:73px;top:421px" width="20" height="20"><use href="#i_fold"/></svg><div class="t" style="left:99.40px;top:423.94px;font-size:12.2px;letter-spacing:-0.047px;">Horizontal Roughing</div><div class="a" style="left:84px;top:451px;width:12px;height:1px;background:repeating-linear-gradient(90deg,#858585 0 1px,transparent 1px 2px)"></div><svg style="left:96px;top:441px" width="20" height="20"><use href="#i_mf"/></svg><div class="t" style="left:122.60px;top:443.94px;font-size:12.2px;transform:scaleX(0.9632);transform-origin:0 0;">Machining Features</div><div class="a" style="left:84px;top:471px;width:12px;height:1px;background:repeating-linear-gradient(90deg,#858585 0 1px,transparent 1px 2px)"></div><svg style="left:96px;top:461px" width="20" height="20"><use href="#i_tool"/></svg><div class="t" style="left:122.60px;top:463.94px;font-size:12.2px;letter-spacing:-0.100px;">FlatMill  10 MM</div><div class="a" style="left:84px;top:491px;width:12px;height:1px;background:repeating-linear-gradient(90deg,#858585 0 1px,transparent 1px 2px)"></div><svg style="left:96px;top:481px" width="20" height="20"><use href="#i_feed"/></svg><div class="t" style="left:122.60px;top:483.94px;font-size:12.2px;transform:scaleX(0.9012);transform-origin:0 0;">Feeds/Speeds</div><div class="a" style="left:84px;top:511px;width:12px;height:1px;background:repeating-linear-gradient(90deg,#858585 0 1px,transparent 1px 2px)"></div><svg style="left:96px;top:501px" width="20" height="20"><use href="#i_clear"/></svg><div class="t" style="left:122.60px;top:503.94px;font-size:12.2px;transform:scaleX(0.9268);transform-origin:0 0;">Clearance Plane</div><div class="a" style="left:84px;top:531px;width:12px;height:1px;background:repeating-linear-gradient(90deg,#858585 0 1px,transparent 1px 2px)"></div><svg style="left:96px;top:521px" width="20" height="20"><use href="#i_param"/></svg><div class="t" style="left:122.60px;top:523.94px;font-size:12.2px;transform:scaleX(0.9230);transform-origin:0 0;">Parameters</div><div class="a" style="left:84px;top:551px;width:12px;height:1px;background:repeating-linear-gradient(90deg,#858585 0 1px,transparent 1px 2px)"></div><svg style="left:96px;top:541px" width="20" height="20"><use href="#i_path"/></svg><div class="t" style="left:122.60px;top:543.94px;font-size:12.2px;letter-spacing:0.139px;">Toolpath</div><div class="a" style="left:84px;top:571px;width:12px;height:1px;background:repeating-linear-gradient(90deg,#858585 0 1px,transparent 1px 2px)"></div><svg style="left:96px;top:561px" width="20" height="20"><use href="#i_ips"/></svg><div class="t" style="left:122.60px;top:563.94px;font-size:12.2px;transform:scaleX(0.9509);transform-origin:0 0;">In-process Stock</div><div class="a" style="left:65px;top:591px;width:8px;height:1px;background:repeating-linear-gradient(90deg,#858585 0 1px,transparent 1px 2px)"></div><svg style="left:56px;top:586.5px" width="9" height="9"><use href="#b_plus"/></svg><svg style="left:73px;top:581px" width="20" height="20"><use href="#i_foldc"/></svg><div class="t" style="left:99.40px;top:583.94px;font-size:12.2px;transform:scaleX(0.9504);transform-origin:0 0;">Parallel Finishing</div><div class="a" style="left:65px;top:611px;width:8px;height:1px;background:repeating-linear-gradient(90deg,#858585 0 1px,transparent 1px 2px)"></div><svg style="left:56px;top:606.5px" width="9" height="9"><use href="#b_plus"/></svg><svg style="left:73px;top:601px" width="20" height="20"><use href="#i_foldc"/></svg><div class="t" style="left:99.40px;top:603.94px;font-size:12.2px;transform:scaleX(0.8756);transform-origin:0 0;">DESBASTE PROFUNDIDAD Y BOLAS</div><div class="a" style="left:65px;top:631px;width:8px;height:1px;background:repeating-linear-gradient(90deg,#858585 0 1px,transparent 1px 2px)"></div><svg style="left:56px;top:626.5px" width="9" height="9"><use href="#b_plus"/></svg><svg style="left:73px;top:621px" width="20" height="20"><use href="#i_foldc"/></svg><div class="t" style="left:99.40px;top:623.94px;font-size:12.2px;transform:scaleX(0.8958);transform-origin:0 0;">RANURA APERTURA</div><div class="a" style="left:65px;top:651px;width:8px;height:1px;background:repeating-linear-gradient(90deg,#858585 0 1px,transparent 1px 2px)"></div><svg style="left:56px;top:646.5px" width="9" height="9"><use href="#b_plus"/></svg><svg style="left:73px;top:641px" width="20" height="20"><use href="#i_foldc"/></svg><div class="t" style="left:99.40px;top:643.94px;font-size:12.2px;transform:scaleX(0.8988);transform-origin:0 0;">RANURA APERTURA-1</div><div class="a" style="left:65px;top:671px;width:8px;height:1px;background:repeating-linear-gradient(90deg,#858585 0 1px,transparent 1px 2px)"></div><svg style="left:56px;top:666.5px" width="9" height="9"><use href="#b_plus"/></svg><svg style="left:73px;top:661px" width="20" height="20"><use href="#i_foldc"/></svg><div class="t" style="left:99.40px;top:663.94px;font-size:12.2px;transform:scaleX(0.8860);transform-origin:0 0;">RANURA RESINA</div><div class="a" style="left:42px;top:691px;width:8px;height:1px;background:repeating-linear-gradient(90deg,#858585 0 1px,transparent 1px 2px)"></div><svg style="left:33px;top:686.5px" width="9" height="9"><use href="#b_minus"/></svg><svg style="left:50px;top:681px" width="20" height="20"><use href="#i_fold2"/></svg><div class="t" style="left:76.40px;top:683.94px;font-size:12.2px;transform:scaleX(0.9240);transform-origin:0 0;font-weight:bold;">ACABADO PROFUNDIDAD TETONES</div><div class="a" style="left:65px;top:711px;width:8px;height:1px;background:repeating-linear-gradient(90deg,#858585 0 1px,transparent 1px 2px)"></div><svg style="left:56px;top:706.5px" width="9" height="9"><use href="#b_plus"/></svg><svg style="left:73px;top:701px" width="20" height="20"><use href="#i_foldc"/></svg><div class="t" style="left:99.40px;top:703.94px;font-size:12.2px;transform:scaleX(0.9178);transform-origin:0 0;">PERFILADO 1 MM PLANA</div><div class="a" style="left:65px;top:731px;width:8px;height:1px;background:repeating-linear-gradient(90deg,#858585 0 1px,transparent 1px 2px)"></div><svg style="left:56px;top:726.5px" width="9" height="9"><use href="#b_plus"/></svg><svg style="left:73px;top:721px" width="20" height="20"><use href="#i_foldc"/></svg><div class="t" style="left:99.40px;top:723.94px;font-size:12.2px;transform:scaleX(0.9206);transform-origin:0 0;">PERFILADO 1 MM PLANA-1</div><div class="a" style="left:42px;top:751px;width:8px;height:1px;background:repeating-linear-gradient(90deg,#858585 0 1px,transparent 1px 2px)"></div><svg style="left:33px;top:746.5px" width="9" height="9"><use href="#b_minus"/></svg><svg style="left:50px;top:741px" width="20" height="20"><use href="#i_fold2"/></svg><div class="t" style="left:76.40px;top:743.94px;font-size:12.2px;transform:scaleX(0.9543);transform-origin:0 0;font-weight:bold;">ACABADO PROFUNDIDAD TIMON</div><div class="a" style="left:65px;top:771px;width:8px;height:1px;background:repeating-linear-gradient(90deg,#858585 0 1px,transparent 1px 2px)"></div><svg style="left:56px;top:766.5px" width="9" height="9"><use href="#b_plus"/></svg><svg style="left:73px;top:761px" width="20" height="20"><use href="#i_foldc"/></svg><div class="t" style="left:99.40px;top:763.94px;font-size:12.2px;transform:scaleX(0.9081);transform-origin:0 0;">ACABADO PROFUNDIDAD Y BOLAS</div><div class="a" style="left:42px;top:791px;width:8px;height:1px;background:repeating-linear-gradient(90deg,#858585 0 1px,transparent 1px 2px)"></div><svg style="left:33px;top:786.5px" width="9" height="9"><use href="#b_minus"/></svg><svg style="left:50px;top:781px" width="20" height="20"><use href="#i_fold2"/></svg><div class="t" style="left:76.40px;top:783.94px;font-size:12.2px;transform:scaleX(0.9131);transform-origin:0 0;font-weight:bold;">ACABADO BISAGRA</div></div>
<div class="a" style="left:339px;top:168px;width:17px;height:795px;background:linear-gradient(90deg,#e6e6e6,#f2f2f2 30%,#efefef)"></div>
<svg style="left:339px;top:168px" width="17" height="795">
<path d="M4.5 13 L8.5 8.5 L12.5 13 Z" fill="#505050"/>
<path d="M4.5 783 L8.5 787.5 L12.5 783 Z" fill="#505050"/>
<rect x="0.5" y="66.5" width="14" height="601" rx="2" fill="url(#gthumb)" stroke="#9a9a9a"/>
<path d="M4 364.5 H11 M4 367.5 H11 M4 370.5 H11" stroke="#404040" stroke-width="1.2"/>
<defs><linearGradient id="gthumb" x1="0" y1="0" x2="1" y2="0"><stop offset="0" stop-color="#f2f2f2"/><stop offset="0.55" stop-color="#e2e2e4"/><stop offset="1" stop-color="#c8c8cc"/></linearGradient></defs>
</svg>
<svg style="left:0;top:0" width="361" height="1000">
<defs><linearGradient id="gsel" x1="0" y1="0" x2="0" y2="1"><stop offset="0" stop-color="#eaf2fc"/><stop offset="1" stop-color="#dae8f8"/></linearGradient>
<radialGradient id="glens" cx="0.4" cy="0.35" r="0.7"><stop offset="0" stop-color="#ffffff"/><stop offset="1" stop-color="#5a90d8"/></radialGradient>
<linearGradient id="gtl2" x1="0" y1="0" x2="1" y2="0"><stop offset="0" stop-color="#909090"/><stop offset="0.5" stop-color="#e8e8e8"/><stop offset="1" stop-color="#7a7a7a"/></linearGradient></defs>
<rect x="62.5" y="966.5" width="23" height="23" fill="url(#gsel)" stroke="#5a9ae0"/>
<rect x="110.5" y="966.5" width="71" height="23" fill="url(#gsel)" stroke="#5a9ae0"/>
<path d="M134 966.5 V989.5 M157.5 966.5 V989.5" stroke="#5a9ae0"/>
<rect x="184" y="970" width="1" height="16" fill="#c8c8c8"/>
<!-- icon 1 -->
<path d="M44 972 L50 969 L57 971 V981 L51 984 L44 981 Z" fill="#b8dcf8" stroke="#6a9ac8" stroke-width="0.6"/>
<path d="M49 980 L54 975 L58 978 V985 L52 988 Z" fill="#f0c830" stroke="#6a5010" stroke-width="0.6"/>
<path d="M42 978 L47 975 L50 978" fill="none" stroke="#d0a020" stroke-width="1.5"/>
<path d="M42 982 L45 979 L48 982 L52 979.5 L55 977" fill="none" stroke="#111" stroke-width="1"/><ellipse cx="43" cy="985" rx="2.4" ry="2.8" fill="url(#glens)" stroke="#2a3a5a" stroke-width="0.9"/><ellipse cx="48" cy="985" rx="2.4" ry="2.8" fill="url(#glens)" stroke="#2a3a5a" stroke-width="0.9"/>
<!-- icon 2 -->
<path d="M66 972 L75 968.5 L82 971.5 V983 L73 987 L66 983 Z" fill="#4ab0c8" stroke="#1a4a60" stroke-width="0.8"/>
<path d="M69 975 L78 971.5 L81 973.5 L72 977 Z" fill="#f8e070" stroke="#8a7020" stroke-width="0.5"/>
<path d="M70 978 L79 974.5 L80 976 L71 979.5 Z" fill="#fff0b0"/>
<path d="M66 982 L69 979 L72 982 L76 979.5 L79 977" fill="none" stroke="#111" stroke-width="1"/><ellipse cx="67" cy="985" rx="2.4" ry="2.8" fill="url(#glens)" stroke="#2a3a5a" stroke-width="0.9"/><ellipse cx="72" cy="985" rx="2.4" ry="2.8" fill="url(#glens)" stroke="#2a3a5a" stroke-width="0.9"/>
<!-- icon 3 -->
<path d="M92 982 Q96 974 104 972 L103 969 L107 974 L102 978 L102 975 Q97 977 95 983 Z" fill="#60d0e0" stroke="#2a98b0" stroke-width="0.6"/>
<path d="M91 976 L92 980" stroke="#f0e040" stroke-width="1.5"/>
<path d="M90 982 L93 979 L96 982 L100 979.5 L103 977" fill="none" stroke="#111" stroke-width="1"/><ellipse cx="91" cy="985" rx="2.4" ry="2.8" fill="url(#glens)" stroke="#2a3a5a" stroke-width="0.9"/><ellipse cx="96" cy="985" rx="2.4" ry="2.8" fill="url(#glens)" stroke="#2a3a5a" stroke-width="0.9"/>
<!-- icon 4 -->
<path d="M120 981 V970 M117.5 972.5 L120 969 L122.5 972.5 M121 978 L130 974.5 M127 974 L130.5 974.5 L128.5 977 M122 980 L127 984" stroke="#1a3a90" stroke-width="1.1" fill="none"/>
<path d="M124 983 L128.5 985.5 L125 987 Z" fill="#3a70d0"/>
<path d="M116 981 Q118 977 121 980" fill="none" stroke="#d03030" stroke-width="0.8"/>
<path d="M114 982 L117 979 L120 982 L124 979.5 L127 977" fill="none" stroke="#111" stroke-width="1"/><ellipse cx="115" cy="985" rx="2.4" ry="2.8" fill="url(#glens)" stroke="#2a3a5a" stroke-width="0.9"/><ellipse cx="120" cy="985" rx="2.4" ry="2.8" fill="url(#glens)" stroke="#2a3a5a" stroke-width="0.9"/>
<!-- icon 5 -->
<path d="M147 970.5 H153 V974 L152 975.5 V980.5 L150 982.5 L148 980.5 V975.5 L147 974 Z" fill="url(#gtl2)" stroke="#6a6a6a" stroke-width="0.5"/>
<path d="M138 982 L141 979 L144 982 L148 979.5 L151 977" fill="none" stroke="#111" stroke-width="1"/><ellipse cx="139" cy="985" rx="2.4" ry="2.8" fill="url(#glens)" stroke="#2a3a5a" stroke-width="0.9"/><ellipse cx="144" cy="985" rx="2.4" ry="2.8" fill="url(#glens)" stroke="#2a3a5a" stroke-width="0.9"/>
<!-- icon 6 -->
<path d="M167 970 H178 V972.5 L174.5 977 V982 L172.5 984.5 L170.5 982 V977 L167 972.5 Z" fill="url(#gtl2)" stroke="#6a6a6a" stroke-width="0.5"/>
<path d="M161 982 L164 979 L167 982 L171 979.5 L174 977" fill="none" stroke="#111" stroke-width="1"/><ellipse cx="162" cy="985" rx="2.4" ry="2.8" fill="url(#glens)" stroke="#2a3a5a" stroke-width="0.9"/><ellipse cx="167" cy="985" rx="2.4" ry="2.8" fill="url(#glens)" stroke="#2a3a5a" stroke-width="0.9"/>
<!-- slider -->
<path d="M196 978.5 H228" stroke="#b4b4b4" stroke-width="2"/>
<rect x="223.5" y="970.5" width="5" height="14" rx="2" fill="#f4f4f4" stroke="#8a8a8a"/>
<!-- gear -->
<circle cx="250.5" cy="978" r="6.5" fill="none" stroke="#8a8a8a" stroke-width="3" stroke-dasharray="2.5 2"/>
<circle cx="250.5" cy="978" r="4.8" fill="none" stroke="#8a8a8a" stroke-width="1.6"/>
</svg>
<div class="a" style="left:35px;top:996px;width:322px;height:15px;background:#f4f4f4"></div>
<div class="t" style="left:36.70px;top:997.14px;font-size:12.2px;transform:scaleX(0.9632);transform-origin:0 0;">Drill 6 MM - #23, Dia:6, Tip Angle:120 deg</div>
<div class="a" style="left:361px;top:81px;width:1501px;height:20px;background:#bfcddc;border-top:1px solid #a9b8c8"></div>
<div class="t" style="left:366.00px;top:85.44px;font-size:12.2px;letter-spacing:-0.074px;color:#45505c;">Command Input Bar</div>
<svg style="left:1831px;top:85px" width="26" height="12"><path d="M2.5 1.5 H8.5 M3.5 1.5 V6.5 H7.5 V1.5 M1.5 6.5 H9.5 M5.5 6.5 V11" stroke="#2a2a2a" stroke-width="1.3" fill="none"/><path d="M17.5 2 L25 9.5 M25 2 L17.5 9.5" stroke="#2a2a2a" stroke-width="1.4"/></svg>
<div class="a" style="left:361px;top:101px;width:1501px;height:60px;background:#f4f4f4;border:1px solid #b4b4b4;border-top:none"></div>
<div class="a" style="left:362px;top:139px;width:1499px;height:21px;background:#fff"></div>
<div class="a" style="left:364px;top:139px;width:1px;height:21px;background:#a8a8a8"></div>
<div class="a" style="left:364px;top:104px;width:1494px;height:36px;background:#efefef;border:1px solid #a8a8a8"></div>
<div class="a" style="left:1842px;top:105px;width:15px;height:33px;background:#f2f2f2"></div>
<svg style="left:1842px;top:105px" width="16" height="34"><path d="M4 11.5 L8 7.5 L12 11.5 Z M4 22.5 L8 26.5 L12 22.5 Z" fill="#8a8a8a"/></svg>
<div class="a" style="left:362px;top:166px;width:1498px;height:1px;background:#a4a4a4"></div>
<svg style="left:362px;top:167px" width="1498" height="844" viewBox="362 167 1498 844"><defs><linearGradient id="gbg" x1="0" y1="0" x2="0" y2="1"><stop offset="0" stop-color="#d5d5d5"/><stop offset="1" stop-color="#8a8a8a"/></linearGradient><linearGradient id="ghole" x1="0" y1="0" x2="1" y2="0"><stop offset="0" stop-color="#6a6058" stop-opacity="0.35"/><stop offset="0.5" stop-color="#b0a890" stop-opacity="0.25"/><stop offset="1" stop-color="#605040" stop-opacity="0.35"/></linearGradient><linearGradient id="gtopE" x1="0" y1="0" x2="1" y2="0"><stop offset="0" stop-color="#5a524c"/><stop offset="0.5" stop-color="#8a8078"/><stop offset="1" stop-color="#a09488"/></linearGradient></defs><rect x="362" y="167" width="1498" height="844" fill="url(#gbg)"/><defs><linearGradient id="gtop" gradientUnits="userSpaceOnUse" x1="0" y1="210" x2="0" y2="956"><stop offset="0" stop-color="#f5e14a"/><stop offset="1" stop-color="#e4d037"/></linearGradient><linearGradient id="gfl" gradientUnits="userSpaceOnUse" x1="0" y1="462" x2="0" y2="988"><stop offset="0" stop-color="#d8a42e"/><stop offset="1" stop-color="#c69228"/></linearGradient><linearGradient id="gbr" gradientUnits="userSpaceOnUse" x1="0" y1="209" x2="0" y2="735"><stop offset="0" stop-color="#e4c63e"/><stop offset="1" stop-color="#dab933"/></linearGradient></defs><polygon points="468.80,462.30 1323.80,955.80 1323.80,988.20 468.80,494.70" fill="url(#gfl)" /><polygon points="1323.80,955.80 1761.50,702.70 1761.50,735.10 1323.80,988.20" fill="#8d6b2a" /><polygon points="906.50,209.20 1761.50,702.70 1323.80,955.80 468.80,462.30" fill="url(#gtop)" /><polygon points="906.50,209.20 468.80,462.30 468.80,494.70 906.50,241.60" fill="#cfb63e" /><polygon points="468.80,462.30 468.80,494.70 496.84,478.49" fill="#b47c2e" /><polygon points="906.50,209.20 1761.50,702.70 1761.50,735.10 906.50,241.60" fill="url(#gbr)" /><polygon points="1761.50,702.70 1761.50,735.10 1733.46,718.91" fill="#8b5e22" /><path d="M897.8 231.2 V263.2 A8.2 4.5 0 0 0 914.2 263.2 V231.2 Z" fill="url(#ghole)"/><path d="M903.0 234.2 V265.2 M909.5 234.2 V265.2" stroke="#fff8c0" stroke-opacity="0.25" stroke-width="1"/><ellipse cx="906.0" cy="231.2" rx="8.2" ry="4.5" fill="url(#gtopE)"/><ellipse cx="907.2" cy="232.4" rx="5.999999999999999" ry="3.0" fill="#a89c8c" fill-opacity="0.55"/><path d="M699.1 346.1 V378.1 A8.2 4.5 0 0 0 715.5 378.1 V346.1 Z" fill="url(#ghole)"/><path d="M704.3 349.1 V380.1 M710.8 349.1 V380.1" stroke="#fff8c0" stroke-opacity="0.25" stroke-width="1"/><ellipse cx="707.3" cy="346.1" rx="8.2" ry="4.5" fill="url(#gtopE)"/><ellipse cx="708.5" cy="347.3" rx="5.999999999999999" ry="3.0" fill="#a89c8c" fill-opacity="0.55"/><path d="M1102.2 349.1 V381.1 A8.2 4.5 0 0 0 1118.6 381.1 V349.1 Z" fill="url(#ghole)"/><path d="M1107.4 352.1 V383.1 M1113.9 352.1 V383.1" stroke="#fff8c0" stroke-opacity="0.25" stroke-width="1"/><ellipse cx="1110.4" cy="349.1" rx="8.2" ry="4.5" fill="url(#gtopE)"/><ellipse cx="1111.6" cy="350.3" rx="5.999999999999999" ry="3.0" fill="#a89c8c" fill-opacity="0.55"/><path d="M499.9 461.3 V493.3 A8.2 4.5 0 0 0 516.3 493.3 V461.3 Z" fill="url(#ghole)"/><path d="M505.1 464.3 V495.3 M511.6 464.3 V495.3" stroke="#fff8c0" stroke-opacity="0.25" stroke-width="1"/><ellipse cx="508.1" cy="461.3" rx="8.2" ry="4.5" fill="url(#gtopE)"/><ellipse cx="509.3" cy="462.5" rx="5.999999999999999" ry="3.0" fill="#a89c8c" fill-opacity="0.55"/><path d="M1306.5 467.1 V499.1 A8.2 4.5 0 0 0 1322.9 499.1 V467.1 Z" fill="url(#ghole)"/><path d="M1311.7 470.1 V501.1 M1318.2 470.1 V501.1" stroke="#fff8c0" stroke-opacity="0.25" stroke-width="1"/><ellipse cx="1314.7" cy="467.1" rx="8.2" ry="4.5" fill="url(#gtopE)"/><ellipse cx="1315.9" cy="468.3" rx="5.999999999999999" ry="3.0" fill="#a89c8c" fill-opacity="0.55"/><path d="M704.3 579.2 V611.2 A8.2 4.5 0 0 0 720.7 611.2 V579.2 Z" fill="url(#ghole)"/><path d="M709.5 582.2 V613.2 M716.0 582.2 V613.2" stroke="#fff8c0" stroke-opacity="0.25" stroke-width="1"/><ellipse cx="712.5" cy="579.2" rx="8.2" ry="4.5" fill="url(#gtopE)"/><ellipse cx="713.7" cy="580.4" rx="5.999999999999999" ry="3.0" fill="#a89c8c" fill-opacity="0.55"/><path d="M1510.8 585.0 V617.0 A8.2 4.5 0 0 0 1527.2 617.0 V585.0 Z" fill="url(#ghole)"/><path d="M1516.0 588.0 V619.0 M1522.5 588.0 V619.0" stroke="#fff8c0" stroke-opacity="0.25" stroke-width="1"/><ellipse cx="1519.0" cy="585.0" rx="8.2" ry="4.5" fill="url(#gtopE)"/><ellipse cx="1520.2" cy="586.2" rx="5.999999999999999" ry="3.0" fill="#a89c8c" fill-opacity="0.55"/><path d="M908.6 697.2 V729.2 A8.2 4.5 0 0 0 925.0 729.2 V697.2 Z" fill="url(#ghole)"/><path d="M913.8 700.2 V731.2 M920.3 700.2 V731.2" stroke="#fff8c0" stroke-opacity="0.25" stroke-width="1"/><ellipse cx="916.8" cy="697.2" rx="8.2" ry="4.5" fill="url(#gtopE)"/><ellipse cx="918.0" cy="698.4" rx="5.999999999999999" ry="3.0" fill="#a89c8c" fill-opacity="0.55"/><path d="M1715.2 703.0 V735.0 A8.2 4.5 0 0 0 1731.6 735.0 V703.0 Z" fill="url(#ghole)"/><path d="M1720.4 706.0 V737.0 M1726.9 706.0 V737.0" stroke="#fff8c0" stroke-opacity="0.25" stroke-width="1"/><ellipse cx="1723.4" cy="703.0" rx="8.2" ry="4.5" fill="url(#gtopE)"/><ellipse cx="1724.6" cy="704.2" rx="5.999999999999999" ry="3.0" fill="#a89c8c" fill-opacity="0.55"/><path d="M1113.0 815.1 V847.1 A8.2 4.5 0 0 0 1129.4 847.1 V815.1 Z" fill="url(#ghole)"/><path d="M1118.2 818.1 V849.1 M1124.7 818.1 V849.1" stroke="#fff8c0" stroke-opacity="0.25" stroke-width="1"/><ellipse cx="1121.2" cy="815.1" rx="8.2" ry="4.5" fill="url(#gtopE)"/><ellipse cx="1122.4" cy="816.3" rx="5.999999999999999" ry="3.0" fill="#a89c8c" fill-opacity="0.55"/><path d="M1516.5 817.9 V849.9 A8.2 4.5 0 0 0 1532.9 849.9 V817.9 Z" fill="url(#ghole)"/><path d="M1521.7 820.9 V851.9 M1528.2 820.9 V851.9" stroke="#fff8c0" stroke-opacity="0.25" stroke-width="1"/><ellipse cx="1524.7" cy="817.9" rx="8.2" ry="4.5" fill="url(#gtopE)"/><ellipse cx="1525.9" cy="819.1" rx="5.999999999999999" ry="3.0" fill="#a89c8c" fill-opacity="0.55"/><path d="M1317.3 933.0 V965.0 A8.2 4.5 0 0 0 1333.7 965.0 V933.0 Z" fill="url(#ghole)"/><path d="M1322.5 936.0 V967.0 M1329.0 936.0 V967.0" stroke="#fff8c0" stroke-opacity="0.25" stroke-width="1"/><ellipse cx="1325.5" cy="933.0" rx="8.2" ry="4.5" fill="url(#gtopE)"/><ellipse cx="1326.7" cy="934.2" rx="5.999999999999999" ry="3.0" fill="#a89c8c" fill-opacity="0.55"/><defs><pattern id="pdot" width="2.5" height="2.5" patternUnits="userSpaceOnUse"><rect x="0" y="0" width="1.4" height="1.4" fill="#dcc870"/></pattern></defs><polygon points="1248.8000000000002,955.8 1323.8000000000002,911.8 1399.8000000000002,955.8 1323.8000000000002,1000.8" fill="#a1a1a1"/><polygon points="1278.8000000000002,938.8 1323.8000000000002,911.8 1353.8000000000002,929.8 1311.8000000000002,953.8" fill="url(#pdot)" fill-opacity="0.75"/><polygon points="1248.8000000000002,955.8 1323.8000000000002,1000.8 1399.8000000000002,955.8 1323.8000000000002,998.8" fill="#a8a8a8" fill-opacity="0.5"/><path d="M1324.4 955.6 L1350 970" stroke="#e03030" stroke-width="2"/><path d="M1344 963 L1351.5 971.5 L1341 969 Z" fill="#e84040"/><path d="M1324.4 955.6 L1346 943" stroke="#30d030" stroke-width="2"/><path d="M1341 940 L1352 939.5 L1345 947 Z" fill="#40e040"/><path d="M1324.4 955.6 V933" stroke="#1010c0" stroke-width="2.2"/><path d="M1320 937 L1324.4 923 L1328.8 937 Z" fill="#2020e0"/><circle cx="1324.4" cy="955.6" r="3" fill="#3030e0" stroke="#fff" stroke-width="0.8"/><path d="M1324 907.5 H1332 L1324 916.5 H1332" stroke="#1a1aa0" stroke-width="1.4" fill="none"/><path d="M1358 927 L1362.5 931.5 L1367 927 M1362.5 931.5 V936" stroke="#30d030" stroke-width="1.4" fill="none"/><path d="M1358 966 L1367 975 M1367 966 L1358 975" stroke="#e02020" stroke-width="1.5" fill="none"/></svg>
<div class="a" style="left:362px;top:166px;width:66px;height:22px;background:#0a246a"></div>
<div class="t" style="left:367.50px;top:171.84px;font-size:12.2px;letter-spacing:0.772px;font-weight:bold;color:#fff;">Iso View</div>
<div class="a" style="left:1860px;top:81px;width:60px;height:932px;background:#fafafa"></div>
<div class="a" style="left:1864px;top:81px;width:56px;height:599px;background:#f2f2f2"></div>
<div class="a" style="left:1864px;top:94px;width:23px;height:574px;background:#ebebeb"></div>
<div class="a" style="left:1867px;top:87px;width:47px;height:2px;background:repeating-linear-gradient(90deg,#a8a8a8 0 2px,transparent 2px 4px)"></div>
<svg style="left:1862px;top:81px" width="58" height="600"><path d="M25 11.5 V15.5 L11 23.599999999999994 Q5.5 26 5.5 30.5 V63 Q5.5 68 12 71 L25 76.69999999999999 Z" fill="#fdfdfd"/><path d="M25 11.5 V15.5 L11 23.599999999999994 Q5.5 26 5.5 30.5 V63 Q5.5 68 12 71 L25 76.69999999999999" fill="none" stroke="#8c8c8c" stroke-width="0.9"/><path d="M12 71 Q5.5 73 5.5 78 V105 Q5.5 110 12 113 L25 119" fill="none" stroke="#8c8c8c" stroke-width="0.9"/><path d="M12 113 Q5.5 115 5.5 120 V190.60000000000002 Q5.5 195.60000000000002 12 198.60000000000002 L25 204.60000000000002" fill="none" stroke="#8c8c8c" stroke-width="0.9"/><path d="M12 198.60000000000002 Q5.5 200.60000000000002 5.5 205.60000000000002 V241.7 Q5.5 246.7 12 249.7 L25 255.7" fill="none" stroke="#8c8c8c" stroke-width="0.9"/><path d="M12 249.7 Q5.5 251.7 5.5 256.7 V314 Q5.5 319 12 322 L25 328" fill="none" stroke="#8c8c8c" stroke-width="0.9"/><path d="M12 322 Q5.5 324 5.5 329 V376 Q5.5 381 12 384 L25 390" fill="none" stroke="#8c8c8c" stroke-width="0.9"/><path d="M12 384 Q5.5 386 5.5 391 V420.7 Q5.5 425.7 12 428.7 L25 434.70000000000005" fill="none" stroke="#8c8c8c" stroke-width="0.9"/><path d="M12 428.7 Q5.5 430.7 5.5 435.70000000000005 V500 Q5.5 505 12 508 L25 514" fill="none" stroke="#8c8c8c" stroke-width="0.9"/><path d="M25 514 V586" stroke="#8c8c8c" stroke-width="0.9"/></svg>
<div class="t" style="left:1883.86px;top:107.4px;font-size:12.2px;letter-spacing:-0.236px;font-weight:bold;transform:rotate(90deg);transform-origin:0 0">Points</div>
<div class="t" style="left:1883.86px;top:158.0px;font-size:12.2px;letter-spacing:-0.117px;transform:rotate(90deg);transform-origin:0 0">Lines</div>
<div class="t" style="left:1883.86px;top:199.7px;font-size:12.2px;letter-spacing:0.008px;transform:rotate(90deg);transform-origin:0 0">Circles &amp;Arcs</div>
<div class="t" style="left:1883.86px;top:286.0px;font-size:12.2px;letter-spacing:0.071px;transform:rotate(90deg);transform-origin:0 0">Curves</div>
<div class="t" style="left:1883.86px;top:336.7px;font-size:12.2px;letter-spacing:-0.106px;transform:rotate(90deg);transform-origin:0 0">Edit Curves</div>
<div class="t" style="left:1883.86px;top:412.9px;font-size:12.2px;letter-spacing:-0.078px;transform:rotate(90deg);transform-origin:0 0">Surfaces</div>
<div class="t" style="left:1883.86px;top:473.0px;font-size:12.2px;letter-spacing:-0.246px;transform:rotate(90deg);transform-origin:0 0">Solids</div>
<div class="t" style="left:1883.86px;top:519.0px;font-size:12.2px;letter-spacing:-0.004px;transform:rotate(90deg);transform-origin:0 0">Dimensions</div>
<svg style="left:1885px;top:95px" width="35" height="180"><rect x="16.5" y="11.5" width="4" height="4" fill="#fff" stroke="#000" stroke-width="1"/><path d="M8 33 L27 53" stroke="#000" stroke-width="1.6"/><rect x="6" y="31" width="4" height="4" fill="#fff" stroke="#c02020" stroke-width="1"/><rect x="15.5" y="41" width="4" height="4" fill="#fff" stroke="#000" stroke-width="1"/><rect x="25" y="51" width="4" height="4" fill="#fff" stroke="#c02020" stroke-width="1"/><circle cx="17.5" cy="73" r="8.5" fill="none" stroke="#000" stroke-width="1.6" stroke-dasharray="1.6 1.6"/><rect x="15.5" y="71" width="4" height="4" fill="#fff" stroke="#000" stroke-width="1"/><rect x="9" y="64" width="4" height="4" fill="#fff" stroke="#c02020" stroke-width="1"/><rect x="9" y="78" width="4" height="4" fill="#fff" stroke="#c02020" stroke-width="1"/><rect x="24" y="71" width="4" height="4" fill="#fff" stroke="#c02020" stroke-width="1"/><rect x="9.5" y="95" width="4" height="4" fill="#fff" stroke="#000" stroke-width="1"/><rect x="9.5" y="101" width="4" height="4" fill="#fff" stroke="#000" stroke-width="1"/><rect x="9.5" y="107" width="4" height="4" fill="#fff" stroke="#000" stroke-width="1"/><rect x="15.5" y="95" width="4" height="4" fill="#fff" stroke="#000" stroke-width="1"/><rect x="15.5" y="101" width="4" height="4" fill="#fff" stroke="#000" stroke-width="1"/><rect x="15.5" y="107" width="4" height="4" fill="#fff" stroke="#000" stroke-width="1"/><rect x="21.5" y="95" width="4" height="4" fill="#fff" stroke="#000" stroke-width="1"/><rect x="21.5" y="101" width="4" height="4" fill="#fff" stroke="#000" stroke-width="1"/><rect x="21.5" y="107" width="4" height="4" fill="#fff" stroke="#000" stroke-width="1"/><rect x="23.5" y="130.0" width="4" height="4" fill="#fff" stroke="#000" stroke-width="1"/><rect x="21.15685424949238" y="135.65685424949237" width="4" height="4" fill="#fff" stroke="#000" stroke-width="1"/><rect x="15.5" y="138.0" width="4" height="4" fill="#fff" stroke="#000" stroke-width="1"/><rect x="9.84314575050762" y="135.65685424949237" width="4" height="4" fill="#fff" stroke="#000" stroke-width="1"/><rect x="7.5" y="130.0" width="4" height="4" fill="#fff" stroke="#000" stroke-width="1"/><rect x="9.843145750507619" y="124.34314575050762" width="4" height="4" fill="#fff" stroke="#000" stroke-width="1"/><rect x="15.5" y="122.0" width="4" height="4" fill="#fff" stroke="#000" stroke-width="1"/><rect x="21.15685424949238" y="124.34314575050762" width="4" height="4" fill="#fff" stroke="#000" stroke-width="1"/><path d="M14 147 Q20 147 24 152 L20 160 L11 166" stroke="#c02020" stroke-width="1.2" fill="none"/><rect x="13" y="146" width="4" height="4" fill="#fff" stroke="#000" stroke-width="1"/><rect x="21" y="150" width="4" height="4" fill="#fff" stroke="#000" stroke-width="1"/><rect x="17.5" y="157" width="4" height="4" fill="#fff" stroke="#000" stroke-width="1"/><rect x="8" y="164" width="4" height="4" fill="#fff" stroke="#000" stroke-width="1"/></svg>
<div class="a" style="left:0;top:1011px;width:1920px;height:29px;background:linear-gradient(180deg,#fdfdfd 0%,#f6f6f6 50%,#efefef 100%)"></div>
<div class="a" style="left:5px;top:1014px;width:98px;height:23px;background:#fbfbfb"></div>
<div class="a" style="left:105px;top:1014px;width:98px;height:23px;background:#fbfbfb"></div>
<div class="a" style="left:205px;top:1014px;width:98px;height:23px;background:#fbfbfb"></div>
<div class="a" style="left:306px;top:1016px;width:1px;height:19px;background:#c8c8c8"></div>
<div class="a" style="left:375px;top:1016px;width:1px;height:19px;background:#c8c8c8"></div>
<div class="a" style="left:541px;top:1016px;width:1px;height:19px;background:#c8c8c8"></div>
<div class="a" style="left:875px;top:1016px;width:1px;height:19px;background:#c8c8c8"></div>
<div class="t" style="left:8.75px;top:1019.14px;font-size:12.2px;transform:scaleX(0.8757);transform-origin:0 0;">-182.547694</div>
<div class="t" style="left:108.75px;top:1019.14px;font-size:12.2px;transform:scaleX(0.8757);transform-origin:0 0;">-225.774001</div>
<div class="t" style="left:207.50px;top:1019.14px;font-size:12.2px;transform:scaleX(0.8784);transform-origin:0 0;">0.000000</div>
<div class="t" style="left:314.00px;top:1019.14px;font-size:12.2px;letter-spacing:-0.038px;">Units: MM</div>
<div class="a" style="left:425px;top:1015px;width:55.5px;height:21.5px;background:#dcecfc;border:1px solid #84b8ec"></div>
<div class="a" style="left:545px;top:1015px;width:53.3px;height:21.5px;background:#dcecfc;border:1px solid #84b8ec"></div>
<div class="a" style="left:655px;top:1015px;width:54.7px;height:21.5px;background:#dcecfc;border:1px solid #84b8ec"></div>
<div class="a" style="left:709.7px;top:1015px;width:59.3px;height:21.5px;background:#dcecfc;border:1px solid #84b8ec"></div>
<div class="a" style="left:829.8px;top:1015px;width:41.4px;height:21.5px;background:#dcecfc;border:1px solid #84b8ec"></div>
<div class="t" style="left:399.80px;top:1019.14px;font-size:12.2px;transform:scaleX(0.8764);transform-origin:0 0;">Grid</div>
<div class="t" style="left:446.40px;top:1019.14px;font-size:12.2px;letter-spacing:-0.128px;">Ortho</div>
<div class="t" style="left:501.80px;top:1019.14px;font-size:12.2px;letter-spacing:0.031px;">Origin</div>
<div class="t" style="left:566.00px;top:1019.14px;font-size:12.2px;transform:scaleX(0.8983);transform-origin:0 0;">End</div>
<div class="t" style="left:620.00px;top:1019.14px;font-size:12.2px;transform:scaleX(0.9340);transform-origin:0 0;">Near</div>
<div class="t" style="left:675.90px;top:1019.14px;font-size:12.2px;letter-spacing:0.220px;">Mid</div>
<div class="t" style="left:731.00px;top:1019.14px;font-size:12.2px;transform:scaleX(0.9449);transform-origin:0 0;">Center</div>
<div class="t" style="left:791.00px;top:1019.14px;font-size:12.2px;transform:scaleX(0.9583);transform-origin:0 0;">Quad</div>
<div class="t" style="left:850.00px;top:1019.14px;font-size:12.2px;letter-spacing:0.249px;">Int.</div>
<svg style="left:0;top:1011px" width="900" height="29">
<rect x="383.5" y="7.5" width="12" height="12" fill="none" stroke="#111" stroke-width="1.6"/><path d="M383.5 11.5 H395.5 M383.5 15.5 H395.5 M387.5 7.5 V19.5 M391.5 7.5 V19.5" stroke="#111" stroke-width="1.3"/>
<path d="M429.5 8 V19 H441" stroke="#111" stroke-width="1.6" stroke-dasharray="1.6 1.4" fill="none"/><circle cx="429.5" cy="7" r="1.6" fill="#fff" stroke="#111" stroke-width="1"/><circle cx="440.5" cy="19" r="1.6" fill="#fff" stroke="#111" stroke-width="1"/>
<path d="M491 6 V19 M484.5 13.5 L491 19 L497.5 13.5" stroke="#111" stroke-width="2" fill="none"/><circle cx="491" cy="19.5" r="1.4" fill="#fff" stroke="#111" stroke-width="0.9"/>
<path d="M550.5 19 L562 7" stroke="#111" stroke-width="2"/><circle cx="550" cy="19.5" r="1.7" fill="#fff" stroke="#111" stroke-width="1"/>
<path d="M603.5 21 L614.5 8.5" stroke="#111" stroke-width="2"/><circle cx="610.5" cy="17" r="1.7" fill="#fff" stroke="#111" stroke-width="1"/>
<path d="M659 20.5 L670.5 7.5" stroke="#111" stroke-width="2"/><circle cx="664.5" cy="14" r="1.7" fill="#fff" stroke="#111" stroke-width="1"/>
<circle cx="719" cy="13.5" r="6" fill="none" stroke="#111" stroke-width="2"/><circle cx="719" cy="13.5" r="1.8" fill="none" stroke="#111" stroke-width="1.2"/>
<circle cx="780" cy="13.5" r="6" fill="none" stroke="#111" stroke-width="2"/><rect x="772.5" y="12" width="3" height="3" fill="#fff" stroke="#111" stroke-width="0.7"/><rect x="784.5" y="12" width="3" height="3" fill="#fff" stroke="#111" stroke-width="0.7"/><rect x="778.5" y="6" width="3" height="3" fill="#fff" stroke="#111" stroke-width="0.7"/><rect x="778.5" y="18" width="3" height="3" fill="#fff" stroke="#111" stroke-width="0.7"/>
<path d="M833.5 7 L845.5 20 M845.5 7 L833.5 20" stroke="#111" stroke-width="2.2"/>
</svg>
<div class="a" style="left:1666px;top:1022px;width:253px;height:22px;border:1px solid #767676;border-radius:3px;background:linear-gradient(180deg,#ffffff,#e6e7f2)"></div>
<div class="t" style="left:1672.00px;top:1025.34px;font-size:12.2px;transform:scaleX(0.9578);transform-origin:0 0;color:#4a4a52;">Solucionar problemas de equipos: 2 mensajes</div>
</body></html>
